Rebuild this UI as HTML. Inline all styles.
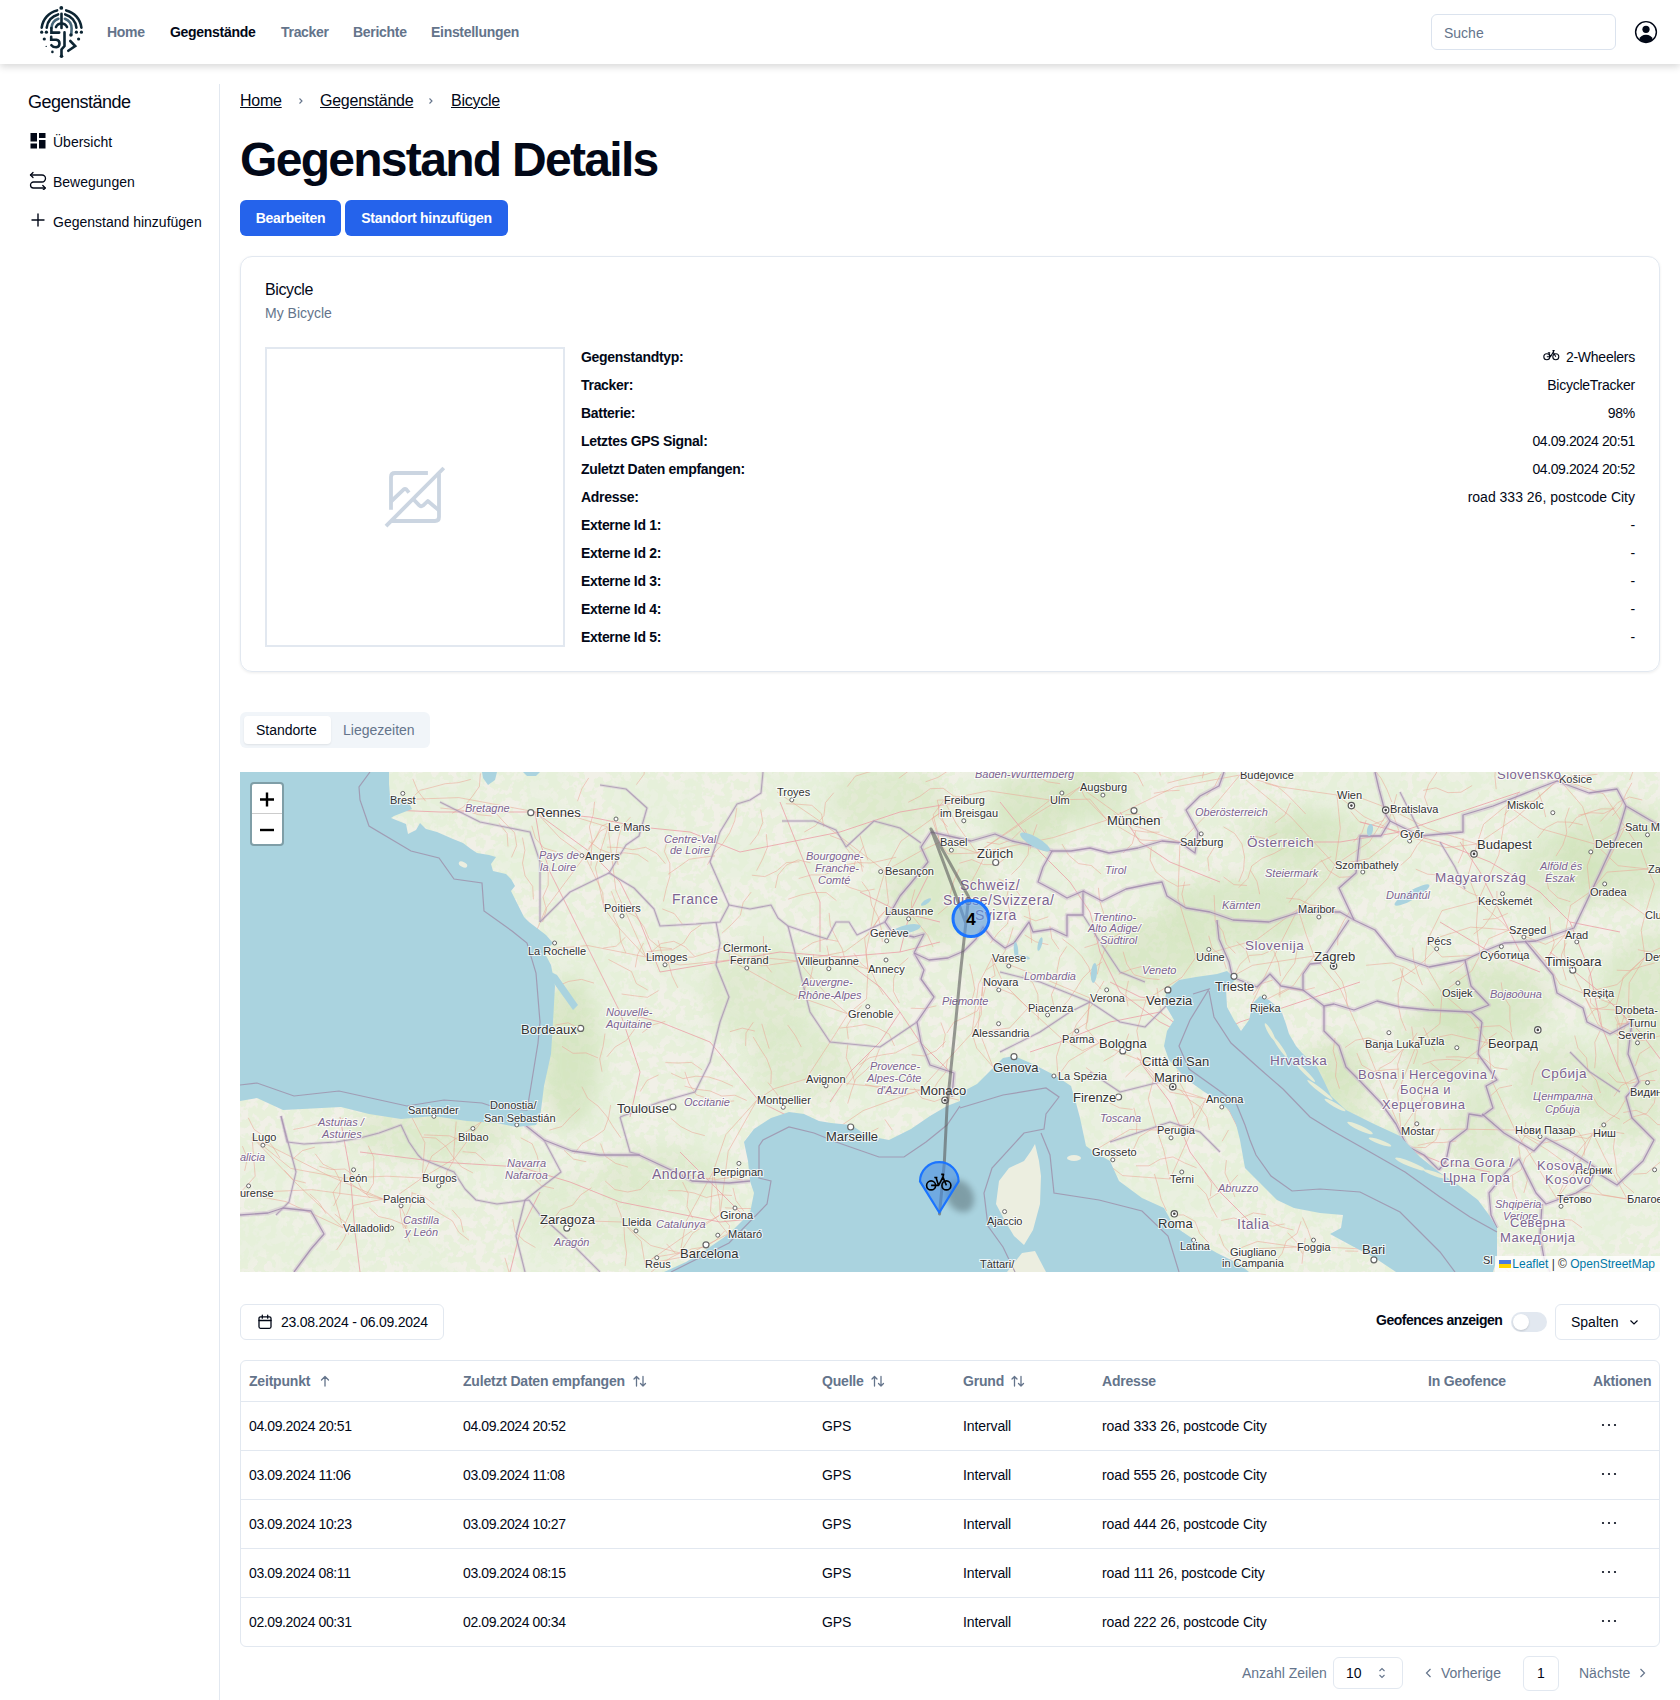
<!DOCTYPE html>
<html><head><meta charset="utf-8">
<style>
*{box-sizing:border-box;margin:0;padding:0}
html,body{width:1680px;height:1700px;overflow:hidden;background:#fff}
body{font-family:"Liberation Sans",sans-serif;color:#020817;position:relative}
.abs{position:absolute;white-space:nowrap}
#hdr{position:absolute;left:0;top:0;width:1680px;height:64px;background:#fff;box-shadow:0 3px 7px rgba(0,0,0,.15);z-index:5}
.nav{position:absolute;top:24px;letter-spacing:-0.3px;font-size:14px;font-weight:bold;color:#64748b;white-space:nowrap}
.nav.act{color:#020817}
#search{position:absolute;left:1431px;top:14px;width:185px;height:36px;border:1px solid #dbe3ee;border-radius:6px;font-size:14px;color:#64748b;padding:10px 0 0 12px}
#sideline{position:absolute;left:219px;top:84px;width:1px;height:1616px;background:#e2e8f0}
.sitem{position:absolute;left:53px;font-size:14px;color:#020817;white-space:nowrap}
.bc{position:absolute;top:92px;letter-spacing:-0.25px;font-size:16px;text-decoration:underline;color:#020817;white-space:nowrap}
.btn{position:absolute;top:200px;height:36px;background:#2563eb;border-radius:6px;color:#fff;font-size:14px;font-weight:bold;text-align:center;line-height:36px;white-space:nowrap;letter-spacing:-0.3px}
#card{position:absolute;left:240px;top:256px;width:1420px;height:416px;border:1px solid #e2e8f0;border-radius:12px;box-shadow:0 1px 3px rgba(0,0,0,.08)}
.lbl{position:absolute;left:581px;letter-spacing:-0.3px;font-size:14px;font-weight:bold;color:#020817;white-space:nowrap}
.val{position:absolute;right:45px;letter-spacing:-0.25px;font-size:14px;color:#020817;text-align:right;white-space:nowrap}
#tabs{position:absolute;left:240px;top:712px;width:190px;height:36px;background:#f1f5f9;border-radius:6px}
#map{position:absolute;left:240px;top:772px;width:1420px;height:500px;background:#aad3df;overflow:hidden}
.th{position:absolute;top:1373px;letter-spacing:-0.2px;font-size:14px;font-weight:bold;color:#64748b;white-space:nowrap}
.td{position:absolute;letter-spacing:-0.1px;font-size:14px;color:#020817;white-space:nowrap}
.hl{position:absolute;left:241px;width:1418px;height:1px;background:#e2e8f0}
.ob{position:absolute;border:1px solid #e2e8f0;border-radius:6px;background:#fff}
.dt{letter-spacing:-0.4px}
</style></head><body>
<div id="hdr">
  <svg class="abs" style="left:0;top:0" width="100" height="64" viewBox="0 0 100 64">
    <g fill="none" stroke="#0d2533" stroke-width="2.6" stroke-linecap="round">
      <path d="M41.7 27.6 A20 20 0 0 1 57.1 10.4"/>
      <path d="M66.2 10.4 A20 20 0 0 1 81.4 27.6"/>
      <path d="M46.7 27.6 A15.3 15.3 0 0 1 58.1 14.4"/>
      <path d="M65.2 14.4 A15.3 15.3 0 0 1 76.4 27.6"/>
      <path d="M51.4 28 A10.5 10.5 0 0 1 58.4 18.8" stroke="#48687a"/>
      <path d="M64.9 18.8 A10.5 10.5 0 0 1 71.6 28.6 L71.3 34.8" stroke="#48687a"/>
      <path d="M56 27.1 A6 6 0 0 1 67 27.1"/>
      <path d="M61.5 13.8 V28"/>
      <path d="M51.4 28 V32.6 H59.2"/>
      <path d="M51.2 36.8 V39.8 H56.3 A3.8 3.8 0 0 1 56.3 47.3 Q53 47.3 51.4 45.2"/>
      <path d="M64.5 32.4 V46 L61.5 49.5 V56"/>
      <path d="M70.3 41 L75.2 46 L68.3 50.8"/>
    </g>
    <g fill="#0d2533">
      <circle cx="61.3" cy="7.9" r="1.9"/>
      <circle cx="41.7" cy="32.2" r="1.6"/><circle cx="46.4" cy="32.2" r="1.6"/>
      <circle cx="76.4" cy="32.2" r="1.6"/><circle cx="81.4" cy="32.2" r="1.6"/>
      <circle cx="44.3" cy="39" r="1.6"/><circle cx="78.6" cy="39" r="1.6"/>
      <circle cx="52.4" cy="51.9" r="1.3"/><circle cx="46.2" cy="46.4" r="0.7"/>
      <circle cx="61.5" cy="56.2" r="1.8"/><circle cx="70.9" cy="35" r="1.7"/>
    </g>
  </svg>
  <div class="nav" style="left:107px">Home</div>
  <div class="nav act" style="left:170px">Gegenstände</div>
  <div class="nav" style="left:281px">Tracker</div>
  <div class="nav" style="left:353px">Berichte</div>
  <div class="nav" style="left:431px">Einstellungen</div>
  <div id="search">Suche</div>
  <svg class="abs" style="left:1634px;top:20px" width="24" height="24" viewBox="0 0 24 24">
    <circle cx="12" cy="12" r="10.4" fill="none" stroke="#020817" stroke-width="1.45"/>
    <circle cx="12" cy="9.3" r="3.6" fill="#020817"/>
    <path d="M5.2 19.3 Q6.8 14.8 12 14.8 Q17.2 14.8 18.8 19.3 Q16 22.4 12 22.4 Q8 22.4 5.2 19.3Z" fill="#020817"/>
  </svg>
</div>
<div id="sideline"></div>
<div class="abs" style="left:28px;top:92px;font-size:18px;letter-spacing:-0.5px">Gegenstände</div>
<svg class="abs" style="left:30px;top:133px" width="16" height="16" viewBox="0 0 16 16" fill="#020817">
  <rect x="0.5" y="0" width="6.5" height="8.5"/><rect x="9" y="0" width="6.5" height="5"/>
  <rect x="0.5" y="10.5" width="6.5" height="5"/><rect x="9" y="7" width="6.5" height="8.5"/>
</svg>
<div class="sitem" style="top:134px">Übersicht</div>
<svg class="abs" style="left:28px;top:170px" width="20" height="20" viewBox="0 0 20 20" fill="none" stroke="#020817" stroke-width="1.3" stroke-linecap="round" stroke-linejoin="round">
  <path d="M5 2.5 L2.5 5 L5 7.5"/><path d="M2.5 5 H14 A3.5 3.5 0 0 1 14 12 H5.5 A3 3 0 0 0 5.5 18 H17"/><path d="M14.8 15.5 L17.3 18 L14.8 20.5"/>
</svg>
<div class="sitem" style="top:174px">Bewegungen</div>
<svg class="abs" style="left:30px;top:212px" width="16" height="16" viewBox="0 0 16 16" stroke="#020817" stroke-width="1.4" stroke-linecap="round">
  <path d="M8 2 V14 M2 8 H14"/>
</svg>
<div class="sitem" style="top:214px">Gegenstand hinzufügen</div>

<div class="bc" style="left:240px">Home</div>
<svg class="abs" style="left:297px;top:97px" width="8" height="8" viewBox="0 0 8 8"><path d="M2.5 1.5 L5 4 L2.5 6.5" fill="none" stroke="#64748b" stroke-width="1.1"/></svg>
<div class="bc" style="left:320px">Gegenstände</div>
<svg class="abs" style="left:427px;top:97px" width="8" height="8" viewBox="0 0 8 8"><path d="M2.5 1.5 L5 4 L2.5 6.5" fill="none" stroke="#64748b" stroke-width="1.1"/></svg>
<div class="bc" style="left:451px">Bicycle</div>
<div class="abs" style="left:240px;top:132px;font-size:48px;font-weight:bold;letter-spacing:-1.7px">Gegenstand Details</div>
<div class="btn" style="left:240px;width:101px">Bearbeiten</div>
<div class="btn" style="left:345px;width:163px">Standort hinzufügen</div>

<div id="card"></div>
<div class="abs" style="left:265px;top:281px;font-size:16px;letter-spacing:-0.4px">Bicycle</div>
<div class="abs" style="left:265px;top:305px;font-size:14px;color:#64748b">My Bicycle</div>
<div class="abs" style="left:265px;top:347px;width:300px;height:300px;border:2px solid #e2e8f0"></div>
<svg class="abs" style="left:375px;top:458px" width="80" height="80" viewBox="0 0 80 80" fill="none" stroke="#cbd5e1" stroke-width="3.8" stroke-linejoin="round">
  <path d="M16 51.7 V19 Q16 15 20 15 H52.9"/><path d="M64 15.7 V59 Q64 63 60 63 H17"/><path d="M11 68.1 L68.8 10"/>
  <path d="M16 43.5 L28.5 31.6 Q30 30.4 31.5 31.6 L34 34.6"/><path d="M38.4 41.2 L44.5 47.6 Q46.2 49 48 47.6 L52.8 43 L64 52.4"/>
</svg>
<div class="lbl" style="top:349px">Gegenstandtyp:</div>
<div class="lbl" style="top:377px">Tracker:</div>
<div class="lbl" style="top:405px">Batterie:</div>
<div class="lbl" style="top:433px">Letztes GPS Signal:</div>
<div class="lbl" style="top:461px">Zuletzt Daten empfangen:</div>
<div class="lbl" style="top:489px">Adresse:</div>
<div class="lbl" style="top:517px">Externe Id 1:</div>
<div class="lbl" style="top:545px">Externe Id 2:</div>
<div class="lbl" style="top:573px">Externe Id 3:</div>
<div class="lbl" style="top:601px">Externe Id 4:</div>
<div class="lbl" style="top:629px">Externe Id 5:</div>
<svg class="abs" style="left:1543px;top:349px" width="17" height="12" viewBox="0 0 17 12" fill="none" stroke="#020817" stroke-width="1.1">
  <circle cx="3.8" cy="7.8" r="3"/><circle cx="12.8" cy="7.8" r="3"/><path d="M3.8 7.8 H7.5 L10.2 3.2 L12.8 7.8 M7.5 7.8 L5.8 3.8 M4.8 3.8 H7.2 M9.5 1.6 H11 L10.2 3.2"/>
</svg>
<div class="val" style="top:349px">2-Wheelers</div>
<div class="val" style="top:377px">BicycleTracker</div>
<div class="val" style="top:405px">98%</div>
<div class="val dt" style="top:433px">04.09.2024 20:51</div>
<div class="val dt" style="top:461px">04.09.2024 20:52</div>
<div class="val" style="top:489px;letter-spacing:0">road 333 26, postcode City</div>
<div class="val" style="top:517px">-</div>
<div class="val" style="top:545px">-</div>
<div class="val" style="top:573px">-</div>
<div class="val" style="top:601px">-</div>
<div class="val" style="top:629px">-</div>

<div id="tabs"></div>
<div class="abs" style="left:244px;top:716px;width:87px;height:28px;background:#fff;border-radius:4px;box-shadow:0 1px 2px rgba(0,0,0,.08)"></div>
<div class="abs" style="left:256px;top:722px;font-size:14px;color:#020817">Standorte</div>
<div class="abs" style="left:343px;top:722px;font-size:14px;color:#64748b">Liegezeiten</div>

<div id="map"><svg width="1420" height="500" viewBox="0 0 1420 500" style="position:absolute;left:0;top:0">
<defs><filter id="blur8" x="-50%" y="-50%" width="200%" height="200%"><feGaussianBlur stdDeviation="9"/></filter><filter id="blur3" x="-50%" y="-50%" width="200%" height="200%"><feGaussianBlur stdDeviation="3"/></filter></defs>
<filter id="tex" x="0" y="0" width="100%" height="100%"><feTurbulence type="fractalNoise" baseFrequency="0.11" numOctaves="3" seed="5" result="n"/><feColorMatrix in="n" type="matrix" values="0 0 0 0 0.78  0 0 0 0 0.87  0 0 0 0 0.69  0 0 0 -14 7.6"/></filter>
<filter id="tex2" x="0" y="0" width="100%" height="100%"><feTurbulence type="fractalNoise" baseFrequency="0.018" numOctaves="2" seed="11" result="n"/><feColorMatrix in="n" type="matrix" values="0 0 0 0 0.80  0 0 0 0 0.88  0 0 0 0 0.72  0 0 0 -6 3.4"/></filter>
<rect width="1420" height="500" fill="#f1f0e7"/>
<rect width="1420" height="500" filter="url(#tex2)" opacity="0.6"/>
<rect width="1420" height="500" filter="url(#tex)" opacity="0.75"/>
<ellipse cx="330" cy="280" rx="30" ry="75" fill="#c9dfb0" opacity="0.55" filter="url(#blur8)"/>
<ellipse cx="650" cy="30" rx="60" ry="35" fill="#c9dfb0" opacity="0.35" filter="url(#blur8)"/>
<ellipse cx="700" cy="120" rx="55" ry="50" fill="#c9dfb0" opacity="0.4" filter="url(#blur8)"/>
<ellipse cx="520" cy="220" rx="55" ry="50" fill="#c9dfb0" opacity="0.3" filter="url(#blur8)"/>
<ellipse cx="560" cy="290" rx="50" ry="40" fill="#c9dfb0" opacity="0.3" filter="url(#blur8)"/>
<ellipse cx="790" cy="40" rx="40" ry="40" fill="#c9dfb0" opacity="0.5" filter="url(#blur8)"/>
<ellipse cx="850" cy="20" rx="40" ry="30" fill="#c9dfb0" opacity="0.45" filter="url(#blur8)"/>
<ellipse cx="910" cy="180" rx="60" ry="35" fill="#c9dfb0" opacity="0.45" filter="url(#blur8)"/>
<ellipse cx="1000" cy="140" rx="80" ry="35" fill="#c9dfb0" opacity="0.45" filter="url(#blur8)"/>
<ellipse cx="1080" cy="80" rx="60" ry="40" fill="#c9dfb0" opacity="0.35" filter="url(#blur8)"/>
<ellipse cx="1200" cy="270" rx="40" ry="45" fill="#c9dfb0" opacity="0.4" filter="url(#blur8)"/>
<ellipse cx="1250" cy="230" rx="60" ry="40" fill="#c9dfb0" opacity="0.45" filter="url(#blur8)"/>
<ellipse cx="1320" cy="100" rx="45" ry="40" fill="#c9dfb0" opacity="0.4" filter="url(#blur8)"/>
<ellipse cx="1380" cy="80" rx="60" ry="50" fill="#c9dfb0" opacity="0.45" filter="url(#blur8)"/>
<ellipse cx="1320" cy="310" rx="50" ry="40" fill="#c9dfb0" opacity="0.35" filter="url(#blur8)"/>
<ellipse cx="1420" cy="220" rx="60" ry="60" fill="#c9dfb0" opacity="0.4" filter="url(#blur8)"/>
<ellipse cx="1390" cy="320" rx="40" ry="50" fill="#c9dfb0" opacity="0.35" filter="url(#blur8)"/>
<ellipse cx="1090" cy="340" rx="40" ry="70" fill="#c9dfb0" opacity="0.35" filter="url(#blur8)"/>
<ellipse cx="1150" cy="400" rx="40" ry="40" fill="#c9dfb0" opacity="0.3" filter="url(#blur8)"/>
<ellipse cx="780" cy="420" rx="20" ry="40" fill="#c9dfb0" opacity="0.3" filter="url(#blur8)"/>
<ellipse cx="190" cy="360" rx="80" ry="30" fill="#c9dfb0" opacity="0.35" filter="url(#blur8)"/>
<ellipse cx="350" cy="440" rx="70" ry="40" fill="#c9dfb0" opacity="0.2" filter="url(#blur8)"/>
<ellipse cx="600" cy="450" rx="60" ry="40" fill="#c9dfb0" opacity="0.25" filter="url(#blur8)"/>
<ellipse cx="420" cy="400" rx="60" ry="25" fill="#c9dfb0" opacity="0.3" filter="url(#blur8)"/>
<ellipse cx="1240" cy="360" rx="30" ry="50" fill="#c9dfb0" opacity="0.35" filter="url(#blur8)"/>
<ellipse cx="1100" cy="300" rx="30" ry="30" fill="#c9dfb0" opacity="0.3" filter="url(#blur8)"/>
<ellipse cx="1050" cy="60" rx="50" ry="25" fill="#c9dfb0" opacity="0.3" filter="url(#blur8)"/>
<path d="M150,28 L218.8,25.6 L296,40" fill="none" stroke="#eba595" stroke-width="0.9" opacity="0.6"/>
<path d="M368,55 L360.1,59.2 L345,84" fill="none" stroke="#eba595" stroke-width="0.9" opacity="0.6"/>
<path d="M368,55 L332.9,44.3 L296,40" fill="none" stroke="#eba595" stroke-width="0.9" opacity="0.6"/>
<path d="M368,55 L355.4,95.7 L364,136" fill="none" stroke="#eba595" stroke-width="0.9" opacity="0.6"/>
<path d="M368,55 L375.9,118.4 L406,185" fill="none" stroke="#eba595" stroke-width="0.9" opacity="0.6"/>
<path d="M537,20 L580.7,49.7 L645,99" fill="none" stroke="#eba595" stroke-width="0.9" opacity="0.6"/>
<path d="M840,15 L823.2,29.3 L810,28" fill="none" stroke="#eba595" stroke-width="0.9" opacity="0.6"/>
<path d="M840,15 L844.5,24.9 L867,48" fill="none" stroke="#eba595" stroke-width="0.9" opacity="0.6"/>
<path d="M840,15 L893.1,53.2 L940,70" fill="none" stroke="#eba595" stroke-width="0.9" opacity="0.6"/>
<path d="M840,15 L790.4,45.5 L737,81" fill="none" stroke="#eba595" stroke-width="0.9" opacity="0.6"/>
<path d="M810,28 L849.9,27.1 L867,48" fill="none" stroke="#eba595" stroke-width="0.9" opacity="0.6"/>
<path d="M810,28 L782.1,49.5 L737,81" fill="none" stroke="#eba595" stroke-width="0.9" opacity="0.6"/>
<path d="M810,28 L748.5,18.8 L704,28" fill="none" stroke="#eba595" stroke-width="0.9" opacity="0.6"/>
<path d="M1000,3 L965.4,44.1 L940,70" fill="none" stroke="#eba595" stroke-width="0.9" opacity="0.6"/>
<path d="M1000,3 L1040.8,15.0 L1097,23" fill="none" stroke="#eba595" stroke-width="0.9" opacity="0.6"/>
<path d="M1000,3 L1050.8,44.9 L1095,93" fill="none" stroke="#eba595" stroke-width="0.9" opacity="0.6"/>
<path d="M1000,3 L934.6,15.0 L867,48" fill="none" stroke="#eba595" stroke-width="0.9" opacity="0.6"/>
<path d="M1097,23 L1112.9,22.9 L1150,37" fill="none" stroke="#eba595" stroke-width="0.9" opacity="0.6"/>
<path d="M1097,23 L1100.3,56.3 L1095,93" fill="none" stroke="#eba595" stroke-width="0.9" opacity="0.6"/>
<path d="M1097,23 L1124.0,44.6 L1160,62" fill="none" stroke="#eba595" stroke-width="0.9" opacity="0.6"/>
<path d="M1150,37 L1153.9,44.7 L1160,62" fill="none" stroke="#eba595" stroke-width="0.9" opacity="0.6"/>
<path d="M1150,37 L1129.6,69.8 L1095,93" fill="none" stroke="#eba595" stroke-width="0.9" opacity="0.6"/>
<path d="M1150,37 L1187.4,56.3 L1237,72" fill="none" stroke="#eba595" stroke-width="0.9" opacity="0.6"/>
<path d="M1319,7 L1293.6,29.0 L1267,33" fill="none" stroke="#eba595" stroke-width="0.9" opacity="0.6"/>
<path d="M1319,7 L1342.5,34.4 L1355,72" fill="none" stroke="#eba595" stroke-width="0.9" opacity="0.6"/>
<path d="M1319,7 L1363.5,21.8 L1385,55" fill="none" stroke="#eba595" stroke-width="0.9" opacity="0.6"/>
<path d="M1319,7 L1276.0,45.7 L1237,72" fill="none" stroke="#eba595" stroke-width="0.9" opacity="0.6"/>
<path d="M1267,33 L1243.6,52.2 L1237,72" fill="none" stroke="#eba595" stroke-width="0.9" opacity="0.6"/>
<path d="M1267,33 L1299.9,56.5 L1355,72" fill="none" stroke="#eba595" stroke-width="0.9" opacity="0.6"/>
<path d="M1267,33 L1258.8,82.8 L1238,129" fill="none" stroke="#eba595" stroke-width="0.9" opacity="0.6"/>
<path d="M1385,55 L1379.0,59.0 L1355,72" fill="none" stroke="#eba595" stroke-width="0.9" opacity="0.6"/>
<path d="M1385,55 L1401.2,78.3 L1408,97" fill="none" stroke="#eba595" stroke-width="0.9" opacity="0.6"/>
<path d="M1385,55 L1369.4,86.4 L1350,120" fill="none" stroke="#eba595" stroke-width="0.9" opacity="0.6"/>
<path d="M345,84 L362.7,120.7 L364,136" fill="none" stroke="#eba595" stroke-width="0.9" opacity="0.6"/>
<path d="M345,84 L319.9,65.9 L296,40" fill="none" stroke="#eba595" stroke-width="0.9" opacity="0.6"/>
<path d="M345,84 L306.0,136.3 L288,179" fill="none" stroke="#eba595" stroke-width="0.9" opacity="0.6"/>
<path d="M645,99 L648.5,130.8 L645,139" fill="none" stroke="#eba595" stroke-width="0.9" opacity="0.6"/>
<path d="M645,99 L680.2,79.3 L700,70" fill="none" stroke="#eba595" stroke-width="0.9" opacity="0.6"/>
<path d="M645,99 L634.8,134.0 L630,161" fill="none" stroke="#eba595" stroke-width="0.9" opacity="0.6"/>
<path d="M645,99 L661.0,69.1 L700,41" fill="none" stroke="#eba595" stroke-width="0.9" opacity="0.6"/>
<path d="M700,70 L692.0,46.3 L700,41" fill="none" stroke="#eba595" stroke-width="0.9" opacity="0.6"/>
<path d="M700,70 L707.9,81.9 L737,81" fill="none" stroke="#eba595" stroke-width="0.9" opacity="0.6"/>
<path d="M700,70 L693.1,42.9 L704,28" fill="none" stroke="#eba595" stroke-width="0.9" opacity="0.6"/>
<path d="M940,70 L900.9,67.9 L867,48" fill="none" stroke="#eba595" stroke-width="0.9" opacity="0.6"/>
<path d="M940,70 L937.9,126.3 L956,185" fill="none" stroke="#eba595" stroke-width="0.9" opacity="0.6"/>
<path d="M1160,62 L1128.7,86.7 L1095,93" fill="none" stroke="#eba595" stroke-width="0.9" opacity="0.6"/>
<path d="M1160,62 L1206.2,75.7 L1237,72" fill="none" stroke="#eba595" stroke-width="0.9" opacity="0.6"/>
<path d="M1355,72 L1347.2,94.0 L1350,120" fill="none" stroke="#eba595" stroke-width="0.9" opacity="0.6"/>
<path d="M1355,72 L1378.1,93.7 L1408,97" fill="none" stroke="#eba595" stroke-width="0.9" opacity="0.6"/>
<path d="M1095,93 L1087.5,106.6 L1058,137" fill="none" stroke="#eba595" stroke-width="0.9" opacity="0.6"/>
<path d="M364,136 L377.2,154.1 L406,185" fill="none" stroke="#eba595" stroke-width="0.9" opacity="0.6"/>
<path d="M645,139 L639.6,144.3 L630,161" fill="none" stroke="#eba595" stroke-width="0.9" opacity="0.6"/>
<path d="M645,139 L624.6,166.1 L628,197" fill="none" stroke="#eba595" stroke-width="0.9" opacity="0.6"/>
<path d="M630,161 L625.9,180.6 L628,197" fill="none" stroke="#eba595" stroke-width="0.9" opacity="0.6"/>
<path d="M630,161 L604.9,179.6 L558,189" fill="none" stroke="#eba595" stroke-width="0.9" opacity="0.6"/>
<path d="M1058,137 L1066.4,163.3 L1074,184" fill="none" stroke="#eba595" stroke-width="0.9" opacity="0.6"/>
<path d="M1058,137 L1038.2,175.8 L1010,236" fill="none" stroke="#eba595" stroke-width="0.9" opacity="0.6"/>
<path d="M1058,137 L1016.6,167.7 L956,185" fill="none" stroke="#eba595" stroke-width="0.9" opacity="0.6"/>
<path d="M1238,129 L1262.5,150.6 L1269,158" fill="none" stroke="#eba595" stroke-width="0.9" opacity="0.6"/>
<path d="M1238,129 L1236.4,153.6 L1240,183" fill="none" stroke="#eba595" stroke-width="0.9" opacity="0.6"/>
<path d="M1238,129 L1228.0,103.7 L1237,72" fill="none" stroke="#eba595" stroke-width="0.9" opacity="0.6"/>
<path d="M1238,129 L1202.0,138.6 L1187,169" fill="none" stroke="#eba595" stroke-width="0.9" opacity="0.6"/>
<path d="M1350,120 L1330.5,133.4 L1325,163" fill="none" stroke="#eba595" stroke-width="0.9" opacity="0.6"/>
<path d="M1350,120 L1373.7,120.8 L1405,143" fill="none" stroke="#eba595" stroke-width="0.9" opacity="0.6"/>
<path d="M1350,120 L1367.0,100.1 L1408,97" fill="none" stroke="#eba595" stroke-width="0.9" opacity="0.6"/>
<path d="M1187,169 L1184.9,191.7 L1202,221" fill="none" stroke="#eba595" stroke-width="0.9" opacity="0.6"/>
<path d="M1187,169 L1202.1,185.0 L1240,183" fill="none" stroke="#eba595" stroke-width="0.9" opacity="0.6"/>
<path d="M1187,169 L1230.7,155.1 L1269,158" fill="none" stroke="#eba595" stroke-width="0.9" opacity="0.6"/>
<path d="M1269,158 L1248.6,166.8 L1240,183" fill="none" stroke="#eba595" stroke-width="0.9" opacity="0.6"/>
<path d="M1269,158 L1283.7,164.4 L1305,189" fill="none" stroke="#eba595" stroke-width="0.9" opacity="0.6"/>
<path d="M1269,158 L1305.4,172.3 L1325,163" fill="none" stroke="#eba595" stroke-width="0.9" opacity="0.6"/>
<path d="M1325,163 L1314.2,175.6 L1305,189" fill="none" stroke="#eba595" stroke-width="0.9" opacity="0.6"/>
<path d="M1325,163 L1324.1,182.5 L1343,221" fill="none" stroke="#eba595" stroke-width="0.9" opacity="0.6"/>
<path d="M1405,143 L1401.2,158.4 L1405,185" fill="none" stroke="#eba595" stroke-width="0.9" opacity="0.6"/>
<path d="M1405,143 L1414.4,111.9 L1408,97" fill="none" stroke="#eba595" stroke-width="0.9" opacity="0.6"/>
<path d="M288,179 L347.7,173.5 L406,185" fill="none" stroke="#eba595" stroke-width="0.9" opacity="0.6"/>
<path d="M483,176 L487.5,170.6 L490,188" fill="none" stroke="#eba595" stroke-width="0.9" opacity="0.6"/>
<path d="M483,176 L521.2,194.0 L558,189" fill="none" stroke="#eba595" stroke-width="0.9" opacity="0.6"/>
<path d="M483,176 L453.2,185.2 L406,185" fill="none" stroke="#eba595" stroke-width="0.9" opacity="0.6"/>
<path d="M490,188 L518.3,185.3 L558,189" fill="none" stroke="#eba595" stroke-width="0.9" opacity="0.6"/>
<path d="M490,188 L440.0,193.0 L406,185" fill="none" stroke="#eba595" stroke-width="0.9" opacity="0.6"/>
<path d="M490,188 L549.8,221.7 L608,242" fill="none" stroke="#eba595" stroke-width="0.9" opacity="0.6"/>
<path d="M558,189 L588.9,186.4 L628,197" fill="none" stroke="#eba595" stroke-width="0.9" opacity="0.6"/>
<path d="M558,189 L590.5,227.1 L608,242" fill="none" stroke="#eba595" stroke-width="0.9" opacity="0.6"/>
<path d="M628,197 L626.5,226.8 L608,242" fill="none" stroke="#eba595" stroke-width="0.9" opacity="0.6"/>
<path d="M752,186 L755.1,203.8 L743,210" fill="none" stroke="#eba595" stroke-width="0.9" opacity="0.6"/>
<path d="M752,186 L763.4,211.4 L788,236" fill="none" stroke="#eba595" stroke-width="0.9" opacity="0.6"/>
<path d="M752,186 L738.5,212.2 L732,261" fill="none" stroke="#eba595" stroke-width="0.9" opacity="0.6"/>
<path d="M752,186 L789.7,200.7 L850,226" fill="none" stroke="#eba595" stroke-width="0.9" opacity="0.6"/>
<path d="M956,185 L942.0,205.2 L906,228" fill="none" stroke="#eba595" stroke-width="0.9" opacity="0.6"/>
<path d="M1240,183 L1231.9,198.8 L1202,221" fill="none" stroke="#eba595" stroke-width="0.9" opacity="0.6"/>
<path d="M1405,185 L1383.3,204.9 L1375,238" fill="none" stroke="#eba595" stroke-width="0.9" opacity="0.6"/>
<path d="M1405,185 L1389.2,210.9 L1388,251" fill="none" stroke="#eba595" stroke-width="0.9" opacity="0.6"/>
<path d="M1405,185 L1377.0,212.6 L1343,221" fill="none" stroke="#eba595" stroke-width="0.9" opacity="0.6"/>
<path d="M743,210 L773.7,222.5 L788,236" fill="none" stroke="#eba595" stroke-width="0.9" opacity="0.6"/>
<path d="M743,210 L741.2,242.7 L732,261" fill="none" stroke="#eba595" stroke-width="0.9" opacity="0.6"/>
<path d="M743,210 L738.0,256.4 L753,295" fill="none" stroke="#eba595" stroke-width="0.9" opacity="0.6"/>
<path d="M1202,221 L1199.8,251.8 L1178,269" fill="none" stroke="#eba595" stroke-width="0.9" opacity="0.6"/>
<path d="M1202,221 L1231.0,245.5 L1248,271" fill="none" stroke="#eba595" stroke-width="0.9" opacity="0.6"/>
<path d="M1343,221 L1351.3,236.4 L1375,238" fill="none" stroke="#eba595" stroke-width="0.9" opacity="0.6"/>
<path d="M1343,221 L1320.0,212.2 L1305,189" fill="none" stroke="#eba595" stroke-width="0.9" opacity="0.6"/>
<path d="M1343,221 L1376.8,233.5 L1388,251" fill="none" stroke="#eba595" stroke-width="0.9" opacity="0.6"/>
<path d="M1343,221 L1358.1,252.7 L1378,263" fill="none" stroke="#eba595" stroke-width="0.9" opacity="0.6"/>
<path d="M608,242 L592.4,266.6 L566,307" fill="none" stroke="#eba595" stroke-width="0.9" opacity="0.6"/>
<path d="M788,236 L796.0,243.1 L822,267" fill="none" stroke="#eba595" stroke-width="0.9" opacity="0.6"/>
<path d="M788,236 L769.7,255.9 L732,261" fill="none" stroke="#eba595" stroke-width="0.9" opacity="0.6"/>
<path d="M850,226 L846.0,256.3 L859,271" fill="none" stroke="#eba595" stroke-width="0.9" opacity="0.6"/>
<path d="M850,226 L847.5,250.3 L822,267" fill="none" stroke="#eba595" stroke-width="0.9" opacity="0.6"/>
<path d="M850,226 L874.4,228.2 L906,228" fill="none" stroke="#eba595" stroke-width="0.9" opacity="0.6"/>
<path d="M1010,236 L1053.3,213.6 L1074,184" fill="none" stroke="#eba595" stroke-width="0.9" opacity="0.6"/>
<path d="M1375,238 L1379.9,253.4 L1388,251" fill="none" stroke="#eba595" stroke-width="0.9" opacity="0.6"/>
<path d="M1375,238 L1384.3,243.6 L1378,263" fill="none" stroke="#eba595" stroke-width="0.9" opacity="0.6"/>
<path d="M1388,251 L1377.0,252.0 L1378,263" fill="none" stroke="#eba595" stroke-width="0.9" opacity="0.6"/>
<path d="M1378,263 L1377.8,293.6 L1390,320" fill="none" stroke="#eba595" stroke-width="0.9" opacity="0.6"/>
<path d="M732,261 L736.7,276.1 L753,295" fill="none" stroke="#eba595" stroke-width="0.9" opacity="0.6"/>
<path d="M732,261 L697.1,299.3 L680,318" fill="none" stroke="#eba595" stroke-width="0.9" opacity="0.6"/>
<path d="M822,267 L816.5,284.5 L818,304" fill="none" stroke="#eba595" stroke-width="0.9" opacity="0.6"/>
<path d="M822,267 L842.5,278.7 L859,271" fill="none" stroke="#eba595" stroke-width="0.9" opacity="0.6"/>
<path d="M1125,272 L1149.6,280.5 L1178,269" fill="none" stroke="#eba595" stroke-width="0.9" opacity="0.6"/>
<path d="M1125,272 L1143.0,316.3 L1161,359" fill="none" stroke="#eba595" stroke-width="0.9" opacity="0.6"/>
<path d="M1125,272 L1100.1,216.4 L1074,184" fill="none" stroke="#eba595" stroke-width="0.9" opacity="0.6"/>
<path d="M1178,269 L1211.6,262.4 L1248,271" fill="none" stroke="#eba595" stroke-width="0.9" opacity="0.6"/>
<path d="M1178,269 L1157.6,321.2 L1161,359" fill="none" stroke="#eba595" stroke-width="0.9" opacity="0.6"/>
<path d="M566,307 L533.6,316.9 L517,328" fill="none" stroke="#eba595" stroke-width="0.9" opacity="0.6"/>
<path d="M566,307 L618.8,312.9 L680,318" fill="none" stroke="#eba595" stroke-width="0.9" opacity="0.6"/>
<path d="M818,304 L829.0,288.9 L859,271" fill="none" stroke="#eba595" stroke-width="0.9" opacity="0.6"/>
<path d="M1390,320 L1378.0,340.7 L1353,361" fill="none" stroke="#eba595" stroke-width="0.9" opacity="0.6"/>
<path d="M168,338 L184.9,370.6 L182,406" fill="none" stroke="#eba595" stroke-width="0.9" opacity="0.6"/>
<path d="M244,346 L241.6,349.7 L218,365" fill="none" stroke="#eba595" stroke-width="0.9" opacity="0.6"/>
<path d="M244,346 L214.4,386.6 L182,406" fill="none" stroke="#eba595" stroke-width="0.9" opacity="0.6"/>
<path d="M517,328 L485.9,362.6 L473,400" fill="none" stroke="#eba595" stroke-width="0.9" opacity="0.6"/>
<path d="M517,328 L488.2,379.3 L480,443" fill="none" stroke="#eba595" stroke-width="0.9" opacity="0.6"/>
<path d="M966,327 L929.8,320.1 L914,305" fill="none" stroke="#eba595" stroke-width="0.9" opacity="0.6"/>
<path d="M966,327 L948.3,352.0 L917,358" fill="none" stroke="#eba595" stroke-width="0.9" opacity="0.6"/>
<path d="M966,327 L925.7,313.2 L902,289" fill="none" stroke="#eba595" stroke-width="0.9" opacity="0.6"/>
<path d="M966,327 L951.8,358.4 L930,407" fill="none" stroke="#eba595" stroke-width="0.9" opacity="0.6"/>
<path d="M12,365 L15.2,404.2 L0,421" fill="none" stroke="#eba595" stroke-width="0.9" opacity="0.6"/>
<path d="M12,365 L50.8,396.4 L103,406" fill="none" stroke="#eba595" stroke-width="0.9" opacity="0.6"/>
<path d="M12,365 L55.1,410.2 L103,456" fill="none" stroke="#eba595" stroke-width="0.9" opacity="0.6"/>
<path d="M12,365 L89.3,404.0 L143,427" fill="none" stroke="#eba595" stroke-width="0.9" opacity="0.6"/>
<path d="M218,365 L191.9,383.9 L182,406" fill="none" stroke="#eba595" stroke-width="0.9" opacity="0.6"/>
<path d="M917,358 L923.9,378.6 L930,407" fill="none" stroke="#eba595" stroke-width="0.9" opacity="0.6"/>
<path d="M917,358 L908.2,327.1 L914,305" fill="none" stroke="#eba595" stroke-width="0.9" opacity="0.6"/>
<path d="M917,358 L889.8,357.5 L852,380" fill="none" stroke="#eba595" stroke-width="0.9" opacity="0.6"/>
<path d="M1161,359 L1219.3,357.1 L1275,358" fill="none" stroke="#eba595" stroke-width="0.9" opacity="0.6"/>
<path d="M1161,359 L1192.9,311.0 L1248,271" fill="none" stroke="#eba595" stroke-width="0.9" opacity="0.6"/>
<path d="M1275,358 L1308.0,378.3 L1335,398" fill="none" stroke="#eba595" stroke-width="0.9" opacity="0.6"/>
<path d="M1275,358 L1303.5,371.1 L1353,361" fill="none" stroke="#eba595" stroke-width="0.9" opacity="0.6"/>
<path d="M1275,358 L1302.9,403.8 L1317,427" fill="none" stroke="#eba595" stroke-width="0.9" opacity="0.6"/>
<path d="M1275,358 L1252.0,308.9 L1248,271" fill="none" stroke="#eba595" stroke-width="0.9" opacity="0.6"/>
<path d="M1353,361 L1333.0,386.2 L1335,398" fill="none" stroke="#eba595" stroke-width="0.9" opacity="0.6"/>
<path d="M1353,361 L1364.5,385.1 L1387,427" fill="none" stroke="#eba595" stroke-width="0.9" opacity="0.6"/>
<path d="M1353,361 L1333.1,403.9 L1317,427" fill="none" stroke="#eba595" stroke-width="0.9" opacity="0.6"/>
<path d="M852,380 L882.6,403.6 L930,407" fill="none" stroke="#eba595" stroke-width="0.9" opacity="0.6"/>
<path d="M103,406 L124.7,421.3 L143,427" fill="none" stroke="#eba595" stroke-width="0.9" opacity="0.6"/>
<path d="M103,406 L93.1,420.4 L103,456" fill="none" stroke="#eba595" stroke-width="0.9" opacity="0.6"/>
<path d="M103,406 L147.0,404.2 L182,406" fill="none" stroke="#eba595" stroke-width="0.9" opacity="0.6"/>
<path d="M182,406 L152.2,427.0 L143,427" fill="none" stroke="#eba595" stroke-width="0.9" opacity="0.6"/>
<path d="M473,400 L479.7,428.7 L480,443" fill="none" stroke="#eba595" stroke-width="0.9" opacity="0.6"/>
<path d="M473,400 L470.5,439.5 L488,462" fill="none" stroke="#eba595" stroke-width="0.9" opacity="0.6"/>
<path d="M473,400 L446.1,449.2 L440,481" fill="none" stroke="#eba595" stroke-width="0.9" opacity="0.6"/>
<path d="M1335,398 L1324.9,408.6 L1317,427" fill="none" stroke="#eba595" stroke-width="0.9" opacity="0.6"/>
<path d="M1335,398 L1362.3,422.7 L1387,427" fill="none" stroke="#eba595" stroke-width="0.9" opacity="0.6"/>
<path d="M0,421 L45.9,429.6 L103,456" fill="none" stroke="#eba595" stroke-width="0.9" opacity="0.6"/>
<path d="M0,421 L72.1,417.7 L143,427" fill="none" stroke="#eba595" stroke-width="0.9" opacity="0.6"/>
<path d="M143,427 L113.6,433.4 L103,456" fill="none" stroke="#eba595" stroke-width="0.9" opacity="0.6"/>
<path d="M1317,427 L1341.2,419.8 L1387,427" fill="none" stroke="#eba595" stroke-width="0.9" opacity="0.6"/>
<path d="M480,443 L489.6,453.7 L488,462" fill="none" stroke="#eba595" stroke-width="0.9" opacity="0.6"/>
<path d="M480,443 L452.5,461.4 L440,481" fill="none" stroke="#eba595" stroke-width="0.9" opacity="0.6"/>
<path d="M480,443 L452.9,458.1 L405,492" fill="none" stroke="#eba595" stroke-width="0.9" opacity="0.6"/>
<path d="M382,450 L401.2,469.4 L405,492" fill="none" stroke="#eba595" stroke-width="0.9" opacity="0.6"/>
<path d="M382,450 L410.9,473.5 L440,481" fill="none" stroke="#eba595" stroke-width="0.9" opacity="0.6"/>
<path d="M382,450 L338.4,448.7 L300,447" fill="none" stroke="#eba595" stroke-width="0.9" opacity="0.6"/>
<path d="M488,462 L468.5,483.1 L440,481" fill="none" stroke="#eba595" stroke-width="0.9" opacity="0.6"/>
<path d="M488,462 L442.7,485.0 L405,492" fill="none" stroke="#eba595" stroke-width="0.9" opacity="0.6"/>
<path d="M990,480 L1017.6,469.4 L1057,475" fill="none" stroke="#eba595" stroke-width="0.9" opacity="0.6"/>
<path d="M982,491 L1014.3,476.8 L1057,475" fill="none" stroke="#eba595" stroke-width="0.9" opacity="0.6"/>
<path d="M1057,475 L1084.5,475.0 L1122,477" fill="none" stroke="#eba595" stroke-width="0.9" opacity="0.6"/>
<path d="M405,492 L414.3,485.2 L440,481" fill="none" stroke="#eba595" stroke-width="0.9" opacity="0.6"/>
<path d="M867,48 L813.3,65.6 L737,81" fill="none" stroke="#eba595" stroke-width="0.9" opacity="0.6"/>
<path d="M737,81 L712.4,72.2 L700,41" fill="none" stroke="#eba595" stroke-width="0.9" opacity="0.6"/>
<path d="M737,81 L715.9,51.1 L704,28" fill="none" stroke="#eba595" stroke-width="0.9" opacity="0.6"/>
<path d="M859,271 L879.9,280.1 L902,289" fill="none" stroke="#eba595" stroke-width="0.9" opacity="0.6"/>
<path d="M906,228 L896.8,258.6 L902,289" fill="none" stroke="#eba595" stroke-width="0.9" opacity="0.6"/>
<path d="M975,214 L1012.6,193.3 L1074,184" fill="none" stroke="#eba595" stroke-width="0.9" opacity="0.6"/>
<path d="M586,364 L623.2,338.6 L680,318" fill="none" stroke="#eba595" stroke-width="0.9" opacity="0.6"/>
<path d="M902,289 L897.0,285.5 L914,305" fill="none" stroke="#eba595" stroke-width="0.9" opacity="0.6"/>
<path d="M704,28 L697.3,28.1 L700,41" fill="none" stroke="#eba595" stroke-width="0.9" opacity="0.6"/>
<path d="M831.5,264.6 L836.3,252.5 L844.5,242.4 L852.6,232.2 L857.3,220.1 L864.0,209.0" fill="none" stroke="#eba595" stroke-width="0.9" opacity="0.6"/>
<path d="M205.5,412.4 L206.9,399.5 L213.7,388.4 L214.2,375.4 L215.1,362.4 L216.2,349.5" fill="none" stroke="#eba595" stroke-width="0.9" opacity="0.6"/>
<path d="M1173.5,292.0 L1177.5,279.7 L1173.4,267.4 L1171.7,254.5" fill="none" stroke="#eba595" stroke-width="0.9" opacity="0.6"/>
<path d="M1362.5,188.3 L1349.6,190.0 L1336.6,189.3" fill="none" stroke="#eba595" stroke-width="0.9" opacity="0.6"/>
<path d="M4.7,398.8 L7.4,386.1 L2.4,374.1" fill="none" stroke="#eba595" stroke-width="0.9" opacity="0.6"/>
<path d="M1046.2,126.1 L1059.2,127.3 L1070.9,133.1 L1083.8,134.1 L1096.3,137.8" fill="none" stroke="#eba595" stroke-width="0.9" opacity="0.6"/>
<path d="M109.0,455.2 L103.9,467.2 L96.6,478.0" fill="none" stroke="#eba595" stroke-width="0.9" opacity="0.6"/>
<path d="M360.6,371.6 L364.9,383.9 L375.6,391.4 L388.0,395.1" fill="none" stroke="#eba595" stroke-width="0.9" opacity="0.6"/>
<path d="M954.2,346.1 L952.0,333.3 L946.0,321.7 L939.6,310.5 L937.6,297.6" fill="none" stroke="#eba595" stroke-width="0.9" opacity="0.6"/>
<path d="M1410.5,274.5 L1399.6,281.6 L1395.4,293.9" fill="none" stroke="#eba595" stroke-width="0.9" opacity="0.6"/>
<path d="M1374.7,224.7 L1366.3,234.7 L1353.8,238.1 L1345.3,248.0" fill="none" stroke="#eba595" stroke-width="0.9" opacity="0.6"/>
<path d="M128.2,373.7 L133.8,385.5 L133.7,398.5 L133.4,411.5 L126.5,422.5" fill="none" stroke="#eba595" stroke-width="0.9" opacity="0.6"/>
<path d="M998.7,115.7 L1007.9,106.4 L1011.7,94.0 L1022.2,86.3 L1034.2,81.4 L1045.5,75.0" fill="none" stroke="#eba595" stroke-width="0.9" opacity="0.6"/>
<path d="M1032.6,208.1 L1020.2,212.0 L1013.2,222.9" fill="none" stroke="#eba595" stroke-width="0.9" opacity="0.6"/>
<path d="M170.5,463.2 L163.4,452.3 L151.3,447.4 L138.6,444.5 L129.1,435.6" fill="none" stroke="#eba595" stroke-width="0.9" opacity="0.6"/>
<path d="M108.5,462.7 L105.0,450.2 L94.8,442.1" fill="none" stroke="#eba595" stroke-width="0.9" opacity="0.6"/>
<path d="M940.0,317.5 L948.6,327.2 L959.4,334.4 L966.8,345.2 L969.4,357.9" fill="none" stroke="#eba595" stroke-width="0.9" opacity="0.6"/>
<path d="M607.4,14.5 L615.3,4.2 L627.7,0.3 L640.3,-2.7 L653.3,-1.7 L664.4,-8.6" fill="none" stroke="#eba595" stroke-width="0.9" opacity="0.6"/>
<path d="M1039.9,225.4 L1039.9,212.4 L1046.9,201.5 L1054.7,191.1 L1057.1,178.3" fill="none" stroke="#eba595" stroke-width="0.9" opacity="0.6"/>
<path d="M589.1,140.9 L590.3,153.8 L596.1,165.5 L602.2,177.0 L605.4,189.6" fill="none" stroke="#eba595" stroke-width="0.9" opacity="0.6"/>
<path d="M1152.8,275.2 L1140.8,270.1 L1128.5,265.9 L1115.7,268.2 L1105.0,275.6" fill="none" stroke="#eba595" stroke-width="0.9" opacity="0.6"/>
<path d="M366.9,284.8 L375.2,274.9 L386.5,268.3 L394.2,257.8 L398.2,245.5 L406.2,235.3" fill="none" stroke="#eba595" stroke-width="0.9" opacity="0.6"/>
<path d="M707.4,287.1 L705.8,300.0 L697.6,310.2 L691.2,321.5" fill="none" stroke="#eba595" stroke-width="0.9" opacity="0.6"/>
<path d="M917.0,215.9 L918.7,228.8 L921.8,241.4" fill="none" stroke="#eba595" stroke-width="0.9" opacity="0.6"/>
<path d="M1375.0,244.9 L1380.6,256.6 L1390.0,265.7 L1402.6,268.5 L1415.2,265.1 L1427.9,262.1" fill="none" stroke="#eba595" stroke-width="0.9" opacity="0.6"/>
<path d="M968.5,470.7 L959.6,461.3 L954.9,449.2 L943.5,442.9 L930.5,443.2" fill="none" stroke="#eba595" stroke-width="0.9" opacity="0.6"/>
<path d="M53.4,357.5 L66.1,355.0 L78.6,351.3 L91.6,352.4 L103.1,346.5" fill="none" stroke="#eba595" stroke-width="0.9" opacity="0.6"/>
<path d="M426.5,471.8 L435.4,481.3" fill="none" stroke="#eba595" stroke-width="0.9" opacity="0.6"/>
<path d="M674.9,117.4 L671.5,129.9 L671.5,142.9 L679.6,153.1 L687.7,163.3 L693.1,175.1" fill="none" stroke="#eba595" stroke-width="0.9" opacity="0.6"/>
<path d="M596.4,128.6 L586.2,120.6 L573.2,120.4 L560.5,123.1 L548.2,127.2" fill="none" stroke="#eba595" stroke-width="0.9" opacity="0.6"/>
<path d="M969.2,99.0 L967.7,86.1 L974.4,75.0" fill="none" stroke="#eba595" stroke-width="0.9" opacity="0.6"/>
<path d="M442.6,410.0 L448.3,421.7 L447.0,434.7 L452.7,446.3" fill="none" stroke="#eba595" stroke-width="0.9" opacity="0.6"/>
<path d="M885.5,305.0 L894.9,296.0 L906.1,289.4 L919.0,290.6" fill="none" stroke="#eba595" stroke-width="0.9" opacity="0.6"/>
<path d="M558.7,106.5 L571.2,102.9 L584.2,103.0 L596.0,97.6" fill="none" stroke="#eba595" stroke-width="0.9" opacity="0.6"/>
<path d="M638.5,356.0 L626.9,361.9" fill="none" stroke="#eba595" stroke-width="0.9" opacity="0.6"/>
<path d="M467.5,92.8 L473.9,81.4 L482.7,71.8 L489.7,60.9 L494.7,48.9 L496.8,36.1" fill="none" stroke="#eba595" stroke-width="0.9" opacity="0.6"/>
<path d="M240.4,1.4 L239.4,14.4 L231.9,25.0 L223.5,35.0 L212.1,41.3" fill="none" stroke="#eba595" stroke-width="0.9" opacity="0.6"/>
<path d="M438.4,402.0 L451.3,403.6 L464.0,406.0 L477.0,407.4 L489.8,405.6 L502.6,408.1" fill="none" stroke="#eba595" stroke-width="0.9" opacity="0.6"/>
<path d="M673.8,315.8 L681.8,326.1 L694.3,329.5 L706.5,325.1 L719.2,328.2" fill="none" stroke="#eba595" stroke-width="0.9" opacity="0.6"/>
<path d="M1061.1,449.3 L1057.0,461.6 L1046.3,469.0 L1042.1,481.3 L1034.1,491.5" fill="none" stroke="#eba595" stroke-width="0.9" opacity="0.6"/>
<path d="M979.2,462.1 L983.9,474.2 L992.7,483.8" fill="none" stroke="#eba595" stroke-width="0.9" opacity="0.6"/>
<path d="M1354.6,193.3 L1348.9,205.0 L1349.8,217.9 L1350.7,230.9 L1359.7,240.3 L1361.7,253.2" fill="none" stroke="#eba595" stroke-width="0.9" opacity="0.6"/>
<path d="M430.7,346.1 L440.6,354.5 L452.2,360.3 L464.8,363.6" fill="none" stroke="#eba595" stroke-width="0.9" opacity="0.6"/>
<path d="M1110.8,39.5 L1119.0,49.6 L1131.5,53.1 L1143.6,48.4" fill="none" stroke="#eba595" stroke-width="0.9" opacity="0.6"/>
<path d="M784.7,162.9 L795.7,169.8 L808.4,172.7" fill="none" stroke="#eba595" stroke-width="0.9" opacity="0.6"/>
<path d="M634.7,117.1 L621.9,119.4 L609.5,115.4 L598.4,108.7" fill="none" stroke="#eba595" stroke-width="0.9" opacity="0.6"/>
<path d="M172.1,420.4 L170.8,433.4 L165.4,445.2 L165.2,458.2 L169.6,470.4" fill="none" stroke="#eba595" stroke-width="0.9" opacity="0.6"/>
<path d="M348.4,76.7 L355.7,65.9 L361.4,54.2 L373.3,48.9" fill="none" stroke="#eba595" stroke-width="0.9" opacity="0.6"/>
<path d="M720.4,115.7 L731.7,109.3 L737.9,97.8 L743.7,86.2 L754.0,78.2 L766.7,75.8" fill="none" stroke="#eba595" stroke-width="0.9" opacity="0.6"/>
<path d="M1298.4,20.2 L1302.9,32.4 L1305.7,45.1" fill="none" stroke="#eba595" stroke-width="0.9" opacity="0.6"/>
<path d="M1175.7,97.1 L1187.6,102.2 L1200.6,103.0 L1212.3,108.7" fill="none" stroke="#eba595" stroke-width="0.9" opacity="0.6"/>
<path d="M1342.9,52.9 L1330.2,50.2 L1317.2,49.9 L1305.6,55.8 L1297.5,66.0" fill="none" stroke="#eba595" stroke-width="0.9" opacity="0.6"/>
<path d="M362.0,299.7 L359.7,286.9 L363.1,274.4 L365.0,261.5" fill="none" stroke="#eba595" stroke-width="0.9" opacity="0.6"/>
<path d="M528.0,310.5 L536.0,320.7 L543.4,331.4" fill="none" stroke="#eba595" stroke-width="0.9" opacity="0.6"/>
<path d="M561.3,275.1 L555.3,263.6 L547.7,253.0" fill="none" stroke="#eba595" stroke-width="0.9" opacity="0.6"/>
<path d="M385.1,494.1 L386.6,481.2 L384.7,468.3 L384.0,455.4 L380.8,442.8 L376.1,430.6" fill="none" stroke="#eba595" stroke-width="0.9" opacity="0.6"/>
<path d="M516.6,98.6 L522.6,87.1 L527.5,75.0 L526.3,62.1" fill="none" stroke="#eba595" stroke-width="0.9" opacity="0.6"/>
<path d="M230.8,7.4 L218.2,10.7 L205.3,11.7 L192.7,15.1 L180.1,18.3 L170.6,27.2" fill="none" stroke="#eba595" stroke-width="0.9" opacity="0.6"/>
<path d="M402.3,260.6 L412.8,252.9 L425.3,249.4" fill="none" stroke="#eba595" stroke-width="0.9" opacity="0.6"/>
<path d="M428.3,418.6 L441.3,418.8 L454.1,421.0 L466.3,425.5 L479.0,422.6 L491.9,423.5" fill="none" stroke="#eba595" stroke-width="0.9" opacity="0.6"/>
<path d="M977.3,445.6 L970.8,434.3 L966.2,422.1 L957.1,412.9" fill="none" stroke="#eba595" stroke-width="0.9" opacity="0.6"/>
<path d="M671.6,282.7 L684.5,284.0 L696.4,278.6 L705.6,269.4" fill="none" stroke="#eba595" stroke-width="0.9" opacity="0.6"/>
<path d="M1029.3,448.6 L1040.8,454.8 L1053.4,458.0" fill="none" stroke="#eba595" stroke-width="0.9" opacity="0.6"/>
<path d="M553.6,227.9 L563.2,219.1 L570.1,208.1 L572.8,195.4 L573.5,182.4" fill="none" stroke="#eba595" stroke-width="0.9" opacity="0.6"/>
<path d="M521.8,251.8 L525.4,264.3 L529.2,276.7" fill="none" stroke="#eba595" stroke-width="0.9" opacity="0.6"/>
<path d="M334.1,381.8 L342.0,371.5 L353.6,365.5 L364.2,358.0 L368.6,345.8 L370.6,333.0" fill="none" stroke="#eba595" stroke-width="0.9" opacity="0.6"/>
<path d="M726.3,27.1 L713.7,24.1 L703.2,16.3 L690.2,16.7 L679.8,24.4 L668.2,30.3" fill="none" stroke="#eba595" stroke-width="0.9" opacity="0.6"/>
<path d="M983.4,54.8 L994.6,61.4 L1002.0,72.1 L1004.5,84.8 L1003.6,97.8 L998.8,109.9" fill="none" stroke="#eba595" stroke-width="0.9" opacity="0.6"/>
<path d="M314.0,416.5 L301.3,413.7 L292.0,404.7 L280.3,398.9 L272.2,388.8" fill="none" stroke="#eba595" stroke-width="0.9" opacity="0.6"/>
<path d="M1306.3,104.2 L1308.5,117.0 L1318.0,125.8 L1330.4,129.7" fill="none" stroke="#eba595" stroke-width="0.9" opacity="0.6"/>
<path d="M228.9,468.2 L218.7,460.2 L212.4,448.8 L201.2,442.3 L190.2,435.3 L180.8,426.4" fill="none" stroke="#eba595" stroke-width="0.9" opacity="0.6"/>
<path d="M510.9,436.5 L497.9,436.5 L484.9,435.8" fill="none" stroke="#eba595" stroke-width="0.9" opacity="0.6"/>
<path d="M1216.4,369.0 L1203.5,370.5 L1190.5,370.7 L1177.7,373.4" fill="none" stroke="#eba595" stroke-width="0.9" opacity="0.6"/>
<path d="M628.0,88.4 L623.9,76.1 L620.0,63.7" fill="none" stroke="#eba595" stroke-width="0.9" opacity="0.6"/>
<path d="M440.3,483.0 L451.8,476.9 L464.6,475.0 L475.8,468.4 L484.7,458.9" fill="none" stroke="#eba595" stroke-width="0.9" opacity="0.6"/>
<path d="M888.4,208.8 L885.8,221.6 L888.1,234.4" fill="none" stroke="#eba595" stroke-width="0.9" opacity="0.6"/>
<path d="M927.4,11.1 L940.0,7.8 L952.7,4.9 L965.4,2.6 L977.9,-1.2" fill="none" stroke="#eba595" stroke-width="0.9" opacity="0.6"/>
<path d="M427.6,66.9 L424.4,79.5 L429.8,91.3 L429.9,104.3 L426.2,116.8 L423.4,129.5" fill="none" stroke="#eba595" stroke-width="0.9" opacity="0.6"/>
<path d="M945.0,134.9 L941.9,122.2 L944.7,109.5" fill="none" stroke="#eba595" stroke-width="0.9" opacity="0.6"/>
<path d="M1267.6,297.4 L1254.7,295.5 L1244.8,287.1 L1231.9,286.2 L1218.9,284.8 L1205.9,285.0" fill="none" stroke="#eba595" stroke-width="0.9" opacity="0.6"/>
<path d="M337.5,29.2 L341.8,16.9 L348.7,5.9" fill="none" stroke="#eba595" stroke-width="0.9" opacity="0.6"/>
<path d="M919.6,207.6 L906.7,206.3 L894.1,202.8 L886.8,192.1 L883.1,179.6" fill="none" stroke="#eba595" stroke-width="0.9" opacity="0.6"/>
<path d="M678.7,269.2 L666.9,274.8 L655.4,280.9 L642.6,282.8 L629.9,285.6 L619.2,293.0" fill="none" stroke="#eba595" stroke-width="0.9" opacity="0.6"/>
<path d="M1200.4,355.8 L1195.8,368.0 L1185.3,375.6 L1172.3,375.2" fill="none" stroke="#eba595" stroke-width="0.9" opacity="0.6"/>
<path d="M1318.6,447.1 L1331.5,448.1 L1342.0,455.8" fill="none" stroke="#eba595" stroke-width="0.9" opacity="0.6"/>
<path d="M1195.2,101.4 L1206.2,108.4 L1218.1,113.6 L1229.2,120.5 L1241.2,125.4" fill="none" stroke="#eba595" stroke-width="0.9" opacity="0.6"/>
<path d="M1394.0,420.8 L1384.0,412.3 L1376.8,401.5 L1375.6,388.6 L1373.4,375.8 L1375.1,362.9" fill="none" stroke="#eba595" stroke-width="0.9" opacity="0.6"/>
<path d="M809.9,153.9 L811.8,166.7 L819.2,177.4" fill="none" stroke="#eba595" stroke-width="0.9" opacity="0.6"/>
<path d="M883.2,80.9 L892.3,71.6 L895.7,59.0" fill="none" stroke="#eba595" stroke-width="0.9" opacity="0.6"/>
<path d="M913.8,21.3 L926.6,19.0 L939.6,18.3" fill="none" stroke="#eba595" stroke-width="0.9" opacity="0.6"/>
<path d="M93.6,433.9 L99.7,422.4 L100.6,409.4 L94.7,397.8 L83.0,392.2 L75.2,381.8" fill="none" stroke="#eba595" stroke-width="0.9" opacity="0.6"/>
<path d="M1153.1,317.1 L1158.6,305.3 L1157.6,292.4 L1161.9,280.1 L1168.6,268.9" fill="none" stroke="#eba595" stroke-width="0.9" opacity="0.6"/>
<path d="M418.1,168.3 L421.6,180.8 L428.7,191.7 L432.2,204.2 L437.9,215.9" fill="none" stroke="#eba595" stroke-width="0.9" opacity="0.6"/>
<path d="M455.6,482.0 L442.8,479.6 L431.2,485.4 L420.4,492.6 L410.3,500.8" fill="none" stroke="#eba595" stroke-width="0.9" opacity="0.6"/>
<path d="M1097.7,173.4 L1097.9,160.4 L1103.8,148.8 L1110.9,137.9" fill="none" stroke="#eba595" stroke-width="0.9" opacity="0.6"/>
<path d="M407.7,218.0 L396.4,211.6 L391.5,199.6 L380.0,193.5 L368.5,187.5" fill="none" stroke="#eba595" stroke-width="0.9" opacity="0.6"/>
<path d="M493.0,415.9 L496.0,428.6 L503.8,439.0" fill="none" stroke="#eba595" stroke-width="0.9" opacity="0.6"/>
<path d="M707.6,55.0 L699.0,45.2 L698.5,32.3" fill="none" stroke="#eba595" stroke-width="0.9" opacity="0.6"/>
<path d="M797.0,52.3 L792.6,64.5 L790.1,77.3" fill="none" stroke="#eba595" stroke-width="0.9" opacity="0.6"/>
<path d="M1264.4,43.1 L1272.7,33.1 L1277.9,21.2" fill="none" stroke="#eba595" stroke-width="0.9" opacity="0.6"/>
<path d="M607.8,272.5 L606.2,285.4 L611.2,297.4 L614.6,309.9" fill="none" stroke="#eba595" stroke-width="0.9" opacity="0.6"/>
<path d="M639.4,276.9 L634.7,289.0 L625.7,298.4 L615.8,306.8 L611.4,319.0 L607.7,331.5" fill="none" stroke="#eba595" stroke-width="0.9" opacity="0.6"/>
<path d="M1256.9,119.0 L1257.0,132.0 L1251.4,143.7 L1243.9,154.3 L1233.6,162.2" fill="none" stroke="#eba595" stroke-width="0.9" opacity="0.6"/>
<path d="M1384.2,361.6 L1371.4,359.4 L1358.4,360.3 L1347.0,366.5 L1334.2,364.4" fill="none" stroke="#eba595" stroke-width="0.9" opacity="0.6"/>
<path d="M1034.8,50.9 L1045.0,42.9 L1050.3,31.0" fill="none" stroke="#eba595" stroke-width="0.9" opacity="0.6"/>
<path d="M422.3,136.9 L434.4,141.7 L442.3,152.1" fill="none" stroke="#eba595" stroke-width="0.9" opacity="0.6"/>
<path d="M658.8,6.3 L669.2,-1.5 L679.5,-9.3 L691.2,-15.1 L702.6,-21.4 L709.4,-32.4" fill="none" stroke="#eba595" stroke-width="0.9" opacity="0.6"/>
<path d="M857.3,202.4 L860.2,189.7 L864.6,177.5 L871.4,166.4 L882.6,159.8 L895.0,156.0" fill="none" stroke="#eba595" stroke-width="0.9" opacity="0.6"/>
<path d="M926.5,438.8 L921.1,427.0 L918.1,414.3 L914.4,401.9" fill="none" stroke="#eba595" stroke-width="0.9" opacity="0.6"/>
<path d="M444.5,314.1 L457.1,317.4 L470.0,318.9 L481.9,324.1 L494.9,323.2 L506.7,328.5" fill="none" stroke="#eba595" stroke-width="0.9" opacity="0.6"/>
<path d="M685.5,9.8 L697.8,5.5 L708.7,-1.6 L712.6,-13.9" fill="none" stroke="#eba595" stroke-width="0.9" opacity="0.6"/>
<path d="M309.4,358.1 L321.9,354.5 L330.6,344.9 L340.2,336.2" fill="none" stroke="#eba595" stroke-width="0.9" opacity="0.6"/>
<path d="M1177.2,260.8 L1169.8,271.6 L1160.0,280.0 L1151.5,289.9 L1140.0,296.1 L1133.3,307.2" fill="none" stroke="#eba595" stroke-width="0.9" opacity="0.6"/>
<path d="M1397.9,177.7 L1410.7,180.2 L1422.6,174.9 L1429.4,163.8 L1441.2,158.3" fill="none" stroke="#eba595" stroke-width="0.9" opacity="0.6"/>
<path d="M892.6,337.4 L879.7,335.9 L868.0,330.2" fill="none" stroke="#eba595" stroke-width="0.9" opacity="0.6"/>
<path d="M1334.7,263.5 L1337.9,276.1 L1346.5,285.9 L1348.0,298.8 L1356.5,308.6 L1360.4,321.0" fill="none" stroke="#eba595" stroke-width="0.9" opacity="0.6"/>
<path d="M1107.4,234.7 L1105.9,221.8 L1102.2,209.3 L1094.5,198.8" fill="none" stroke="#eba595" stroke-width="0.9" opacity="0.6"/>
<path d="M605.1,92.9 L617.9,90.6 L630.8,91.0 L643.5,88.2 L656.2,85.2" fill="none" stroke="#eba595" stroke-width="0.9" opacity="0.6"/>
<path d="M885.2,42.7 L898.2,42.1 L909.9,47.7 L922.7,45.5" fill="none" stroke="#eba595" stroke-width="0.9" opacity="0.6"/>
<path d="M1113.3,70.2 L1122.0,60.5 L1126.2,48.2" fill="none" stroke="#eba595" stroke-width="0.9" opacity="0.6"/>
<path d="M863.6,289.2 L874.9,282.7 L884.4,273.9 L888.8,261.6" fill="none" stroke="#eba595" stroke-width="0.9" opacity="0.6"/>
<path d="M1283.8,395.8 L1287.4,408.3 L1283.9,420.9" fill="none" stroke="#eba595" stroke-width="0.9" opacity="0.6"/>
<path d="M788.2,132.2 L790.0,145.1 L790.7,158.1 L791.7,171.1" fill="none" stroke="#eba595" stroke-width="0.9" opacity="0.6"/>
<path d="M1285.8,350.2 L1285.3,363.2 L1278.6,374.3 L1280.5,387.2" fill="none" stroke="#eba595" stroke-width="0.9" opacity="0.6"/>
<path d="M1193.9,234.0 L1185.5,224.0 L1175.5,215.7 L1164.7,208.6 L1160.3,196.4" fill="none" stroke="#eba595" stroke-width="0.9" opacity="0.6"/>
<path d="M903.3,14.3 L897.6,2.6 L886.6,-4.3 L875.4,-10.8 L867.2,-20.9" fill="none" stroke="#eba595" stroke-width="0.9" opacity="0.6"/>
<path d="M590.1,63.5 L602.3,68.2 L611.7,77.1 L620.4,86.8 L622.4,99.6" fill="none" stroke="#eba595" stroke-width="0.9" opacity="0.6"/>
<path d="M403.5,171.0 L397.6,182.6 L395.3,195.4" fill="none" stroke="#eba595" stroke-width="0.9" opacity="0.6"/>
<path d="M1175.4,201.9 L1164.3,195.1 L1152.0,190.9 L1139.0,192.1 L1126.1,193.3" fill="none" stroke="#eba595" stroke-width="0.9" opacity="0.6"/>
<path d="M1012.7,63.8 L1025.4,66.7 L1037.3,61.4" fill="none" stroke="#eba595" stroke-width="0.9" opacity="0.6"/>
<path d="M1026.2,442.8 L1013.3,440.9 L1001.4,446.1" fill="none" stroke="#eba595" stroke-width="0.9" opacity="0.6"/>
<path d="M65.9,411.0 L53.3,407.8 L44.4,398.3" fill="none" stroke="#eba595" stroke-width="0.9" opacity="0.6"/>
<path d="M868.7,308.3 L856.7,303.4 L846.1,295.7" fill="none" stroke="#eba595" stroke-width="0.9" opacity="0.6"/>
<path d="M52.5,387.3 L62.3,378.7 L74.8,375.2" fill="none" stroke="#eba595" stroke-width="0.9" opacity="0.6"/>
<path d="M1116.9,281.1 L1121.8,293.1 L1133.1,299.6 L1145.9,297.8 L1158.9,297.1" fill="none" stroke="#eba595" stroke-width="0.9" opacity="0.6"/>
<path d="M706.8,261.1 L713.9,250.2 L725.8,245.0 L737.3,238.9 L742.5,227.0 L745.6,214.4" fill="none" stroke="#eba595" stroke-width="0.9" opacity="0.6"/>
<path d="M1392.7,237.7 L1387.2,249.5 L1382.2,261.5" fill="none" stroke="#eba595" stroke-width="0.9" opacity="0.6"/>
<path d="M1272.0,313.4 L1259.3,316.0 L1249.6,324.7" fill="none" stroke="#eba595" stroke-width="0.9" opacity="0.6"/>
<path d="M1372.2,44.1 L1380.7,34.2 L1385.7,22.2 L1391.9,10.8" fill="none" stroke="#eba595" stroke-width="0.9" opacity="0.6"/>
<path d="M1310.4,182.9 L1314.3,170.5 L1310.7,158.0 L1309.4,145.1" fill="none" stroke="#eba595" stroke-width="0.9" opacity="0.6"/>
<path d="M86.0,441.7 L79.1,430.6 L69.7,421.7" fill="none" stroke="#eba595" stroke-width="0.9" opacity="0.6"/>
<path d="M1185.6,304.5 L1180.8,316.6 L1182.0,329.5 L1175.1,340.5 L1174.8,353.5 L1166.9,363.8" fill="none" stroke="#eba595" stroke-width="0.9" opacity="0.6"/>
<path d="M232.9,400.9 L221.4,394.9 L213.1,385.0 L205.7,374.2 L195.6,366.1 L182.6,365.2" fill="none" stroke="#eba595" stroke-width="0.9" opacity="0.6"/>
<path d="M1383.0,351.6 L1394.0,344.6 L1406.6,341.4 L1414.3,331.0 L1416.3,318.2" fill="none" stroke="#eba595" stroke-width="0.9" opacity="0.6"/>
<path d="M1182.3,292.3 L1194.7,288.2 L1207.6,287.4 L1220.6,288.5" fill="none" stroke="#eba595" stroke-width="0.9" opacity="0.6"/>
<path d="M1272.5,403.7 L1273.0,416.7 L1277.7,428.9" fill="none" stroke="#eba595" stroke-width="0.9" opacity="0.6"/>
<path d="M223.3,460.3 L220.6,447.6 L212.1,437.8" fill="none" stroke="#eba595" stroke-width="0.9" opacity="0.6"/>
<path d="M1264.7,496.4 L1274.5,504.9 L1287.4,506.5 L1300.2,509.2 L1310.7,516.7 L1323.5,519.3" fill="none" stroke="#eba595" stroke-width="0.9" opacity="0.6"/>
<path d="M1065.3,465.9 L1063.3,478.7 L1062.0,491.7" fill="none" stroke="#eba595" stroke-width="0.9" opacity="0.6"/>
<path d="M293.4,127.4 L292.7,114.4 L285.1,103.9 L282.5,91.1 L284.9,78.3 L282.5,65.6" fill="none" stroke="#eba595" stroke-width="0.9" opacity="0.6"/>
<path d="M1256.8,260.9 L1246.0,268.1 L1239.1,279.1 L1237.7,292.0" fill="none" stroke="#eba595" stroke-width="0.9" opacity="0.6"/>
<path d="M995.5,181.4 L986.4,172.1 L982.9,159.6 L975.2,149.1 L974.7,136.1 L974.1,123.1" fill="none" stroke="#eba595" stroke-width="0.9" opacity="0.6"/>
<path d="M1230.2,185.8 L1220.4,194.3 L1209.5,201.4" fill="none" stroke="#eba595" stroke-width="0.9" opacity="0.6"/>
<path d="M489.8,259.7 L502.3,256.1 L514.9,259.1" fill="none" stroke="#eba595" stroke-width="0.9" opacity="0.6"/>
<path d="M1344.0,383.6 L1345.2,370.7 L1338.3,359.7 L1327.5,352.4" fill="none" stroke="#eba595" stroke-width="0.9" opacity="0.6"/>
<path d="M256.6,41.8 L265.3,51.5 L274.6,60.7 L276.7,73.5 L271.5,85.4" fill="none" stroke="#eba595" stroke-width="0.9" opacity="0.6"/>
<path d="M564.3,60.0 L575.7,53.6 L583.9,43.6 L585.4,30.7 L593.8,20.7" fill="none" stroke="#eba595" stroke-width="0.9" opacity="0.6"/>
<path d="M719.2,91.3 L731.7,87.6 L743.7,92.6 L756.7,92.7 L767.1,84.9" fill="none" stroke="#eba595" stroke-width="0.9" opacity="0.6"/>
<path d="M363.3,176.0 L376.2,174.2 L385.5,165.1" fill="none" stroke="#eba595" stroke-width="0.9" opacity="0.6"/>
<path d="M1072.0,469.7 L1067.8,457.4 L1062.5,445.5" fill="none" stroke="#eba595" stroke-width="0.9" opacity="0.6"/>
<path d="M668.4,185.8 L658.6,194.4 L653.7,206.4 L653.4,219.4 L659.3,231.0" fill="none" stroke="#eba595" stroke-width="0.9" opacity="0.6"/>
<path d="M962.3,6.3 L965.0,-6.4 L961.6,-18.9 L964.1,-31.7" fill="none" stroke="#eba595" stroke-width="0.9" opacity="0.6"/>
<path d="M1105.2,479.0 L1118.2,479.2" fill="none" stroke="#eba595" stroke-width="0.9" opacity="0.6"/>
<path d="M642.3,169.9 L641.3,156.9 L637.9,144.4 L631.6,133.0 L629.4,120.2 L621.8,109.6" fill="none" stroke="#eba595" stroke-width="0.9" opacity="0.6"/>
<path d="M623.3,74.7 L616.3,85.6 L613.0,98.2 L604.3,107.9" fill="none" stroke="#eba595" stroke-width="0.9" opacity="0.6"/>
<path d="M475.0,83.9 L462.1,85.4 L449.2,87.3 L438.7,94.9 L428.0,102.3" fill="none" stroke="#eba595" stroke-width="0.9" opacity="0.6"/>
<path d="M896.0,393.8 L909.0,393.8 L920.2,387.2 L933.0,384.9 L944.5,390.9 L956.6,395.8" fill="none" stroke="#eba595" stroke-width="0.9" opacity="0.6"/>
<path d="M371.4,119.3 L376.1,131.5 L373.7,144.2 L379.1,156.0 L380.6,168.9 L385.8,180.9" fill="none" stroke="#eba595" stroke-width="0.9" opacity="0.6"/>
<path d="M1389.7,8.0 L1394.4,-4.1 L1398.2,-16.5 L1406.5,-26.5 L1419.1,-29.7" fill="none" stroke="#eba595" stroke-width="0.9" opacity="0.6"/>
<path d="M406.7,180.0 L419.6,178.2 L432.5,177.7 L443.6,171.0 L450.7,160.1 L461.3,152.6" fill="none" stroke="#eba595" stroke-width="0.9" opacity="0.6"/>
<path d="M1010.5,98.4 L1017.0,109.6 L1019.7,122.3" fill="none" stroke="#eba595" stroke-width="0.9" opacity="0.6"/>
<path d="M1081.0,87.7 L1088.3,98.4 L1099.3,105.3 L1112.3,104.7" fill="none" stroke="#eba595" stroke-width="0.9" opacity="0.6"/>
<path d="M1040.5,204.1 L1038.5,191.2 L1033.8,179.1" fill="none" stroke="#eba595" stroke-width="0.9" opacity="0.6"/>
<path d="M400.1,319.6 L406.9,308.5 L418.6,302.9" fill="none" stroke="#eba595" stroke-width="0.9" opacity="0.6"/>
<path d="M378.1,93.0 L376.3,80.1 L378.2,67.3 L381.5,54.7 L390.4,45.2" fill="none" stroke="#eba595" stroke-width="0.9" opacity="0.6"/>
<path d="M1375.6,35.7 L1363.9,41.4 L1351.0,40.7 L1338.2,43.2" fill="none" stroke="#eba595" stroke-width="0.9" opacity="0.6"/>
<path d="M1009.9,190.7 L1006.2,178.2 L996.6,169.5" fill="none" stroke="#eba595" stroke-width="0.9" opacity="0.6"/>
<path d="M1037.9,223.2 L1049.3,216.9 L1062.2,218.7 L1074.8,215.6" fill="none" stroke="#eba595" stroke-width="0.9" opacity="0.6"/>
<path d="M259.0,51.3 L267.1,61.5 L268.0,74.5" fill="none" stroke="#eba595" stroke-width="0.9" opacity="0.6"/>
<path d="M1049.0,130.7 L1056.2,119.8 L1066.0,111.4 L1070.0,99.0 L1079.5,90.2 L1091.3,84.6" fill="none" stroke="#eba595" stroke-width="0.9" opacity="0.6"/>
<path d="M700.9,250.4 L705.3,262.6 L702.8,275.4" fill="none" stroke="#eba595" stroke-width="0.9" opacity="0.6"/>
<path d="M769.1,113.7 L766.5,126.5 L769.9,139.0 L767.5,151.8 L758.2,160.8 L750.4,171.2" fill="none" stroke="#eba595" stroke-width="0.9" opacity="0.6"/>
<path d="M746.4,197.8 L757.1,190.5 L764.6,179.9 L769.4,167.8 L773.2,155.4" fill="none" stroke="#eba595" stroke-width="0.9" opacity="0.6"/>
<path d="M1393.3,402.2 L1406.3,401.4 L1416.4,393.1 L1426.6,385.2 L1439.6,384.9 L1450.4,392.1" fill="none" stroke="#eba595" stroke-width="0.9" opacity="0.6"/>
<path d="M354.0,211.1 L341.5,207.4 L328.7,209.4 L316.7,214.4" fill="none" stroke="#eba595" stroke-width="0.9" opacity="0.6"/>
<path d="M950.2,112.7 L937.3,114.2 L925.9,107.9 L915.8,99.7 L910.1,88.0 L911.3,75.0" fill="none" stroke="#eba595" stroke-width="0.9" opacity="0.6"/>
<path d="M1256.2,17.2 L1254.9,4.2 L1255.9,-8.7 L1259.2,-21.3 L1267.5,-31.4" fill="none" stroke="#eba595" stroke-width="0.9" opacity="0.6"/>
<path d="M172.8,6.8 L177.7,18.9 L185.6,29.2" fill="none" stroke="#eba595" stroke-width="0.9" opacity="0.6"/>
<path d="M919.5,60.2 L906.5,60.1 L893.6,58.3 L884.0,49.5 L873.7,41.6" fill="none" stroke="#eba595" stroke-width="0.9" opacity="0.6"/>
<path d="M1300.1,288.7 L1294.0,300.2 L1291.6,312.9" fill="none" stroke="#eba595" stroke-width="0.9" opacity="0.6"/>
<path d="M644.9,347.4 L652.2,358.2" fill="none" stroke="#eba595" stroke-width="0.9" opacity="0.6"/>
<path d="M654.5,274.0 L649.2,262.1 L637.8,255.9 L625.2,252.5 L612.4,254.7 L599.5,256.1" fill="none" stroke="#eba595" stroke-width="0.9" opacity="0.6"/>
<path d="M1376.8,198.2 L1389.8,198.6 L1402.1,194.3 L1414.7,191.0" fill="none" stroke="#eba595" stroke-width="0.9" opacity="0.6"/>
<path d="M697.8,142.4 L707.7,134.0 L710.4,121.3 L713.9,108.8 L719.2,96.9" fill="none" stroke="#eba595" stroke-width="0.9" opacity="0.6"/>
<path d="M494.2,328.9 L481.2,330.1 L468.7,326.7 L456.3,322.8 L449.1,312.0 L444.8,299.7" fill="none" stroke="#eba595" stroke-width="0.9" opacity="0.6"/>
<path d="M1326.2,208.4 L1322.8,195.8 L1321.4,182.9 L1326.3,170.9" fill="none" stroke="#eba595" stroke-width="0.9" opacity="0.6"/>
<path d="M1166.1,258.9 L1161.1,246.9 L1158.4,234.2 L1158.0,221.2 L1161.3,208.6 L1163.1,195.7" fill="none" stroke="#eba595" stroke-width="0.9" opacity="0.6"/>
<path d="M780.9,58.7 L771.5,67.7 L759.3,72.3 L746.5,70.2" fill="none" stroke="#eba595" stroke-width="0.9" opacity="0.6"/>
<path d="M862.4,189.8 L851.7,197.1 L842.6,206.4 L835.7,217.4 L828.4,228.2 L819.7,237.8" fill="none" stroke="#eba595" stroke-width="0.9" opacity="0.6"/>
<path d="M920.4,3.4 L917.9,-9.4 L912.0,-20.9 L906.7,-32.8 L906.7,-45.8 L905.6,-58.8" fill="none" stroke="#eba595" stroke-width="0.9" opacity="0.6"/>
<path d="M535.3,116.0 L538.0,103.2 L546.2,93.2 L558.1,87.9 L570.7,90.9" fill="none" stroke="#eba595" stroke-width="0.9" opacity="0.6"/>
<path d="M1293.0,5.3 L1306.0,5.6 L1319.0,6.5 L1331.7,4.0 L1344.7,3.6 L1357.6,2.2" fill="none" stroke="#eba595" stroke-width="0.9" opacity="0.6"/>
<path d="M844.5,175.6 L857.0,171.8 L865.5,162.0" fill="none" stroke="#eba595" stroke-width="0.9" opacity="0.6"/>
<path d="M531.7,200.4 L523.8,190.1 L523.7,177.1 L523.4,164.1" fill="none" stroke="#eba595" stroke-width="0.9" opacity="0.6"/>
<path d="M625.0,312.3 L637.6,315.4 L648.5,322.7 L661.5,322.9 L674.3,320.6" fill="none" stroke="#eba595" stroke-width="0.9" opacity="0.6"/>
<path d="M520.7,37.5 L522.8,50.4 L517.9,62.4 L510.0,72.7" fill="none" stroke="#eba595" stroke-width="0.9" opacity="0.6"/>
<path d="M1261.2,210.4 L1263.0,223.3 L1269.9,234.4 L1269.9,247.4 L1271.6,260.3" fill="none" stroke="#eba595" stroke-width="0.9" opacity="0.6"/>
<path d="M896.5,361.4 L896.9,348.4 L893.9,335.8" fill="none" stroke="#eba595" stroke-width="0.9" opacity="0.6"/>
<path d="M980.8,2.0 L975.0,13.6 L966.6,23.5" fill="none" stroke="#eba595" stroke-width="0.9" opacity="0.6"/>
<path d="M785.6,133.0 L778.9,121.9 L770.8,111.7 L758.7,107.0" fill="none" stroke="#eba595" stroke-width="0.9" opacity="0.6"/>
<path d="M222.6,379.7 L235.6,380.7 L245.5,389.2" fill="none" stroke="#eba595" stroke-width="0.9" opacity="0.6"/>
<path d="M696.4,233.8 L683.7,236.7 L670.7,236.2" fill="none" stroke="#eba595" stroke-width="0.9" opacity="0.6"/>
<path d="M822.0,72.0 L828.6,83.1 L838.5,91.6 L851.3,93.5 L861.2,102.0" fill="none" stroke="#eba595" stroke-width="0.9" opacity="0.6"/>
<path d="M826.8,174.4 L819.7,185.3 L817.2,198.1 L816.6,211.1 L811.4,222.9 L814.2,235.6" fill="none" stroke="#eba595" stroke-width="0.9" opacity="0.6"/>
<path d="M316.5,79.7 L304.0,76.0 L295.4,66.3 L291.8,53.8" fill="none" stroke="#eba595" stroke-width="0.9" opacity="0.6"/>
<path d="M431.2,301.3 L443.1,306.6 L455.9,304.2 L468.8,305.0 L481.2,308.9 L493.1,314.3" fill="none" stroke="#eba595" stroke-width="0.9" opacity="0.6"/>
<path d="M587.2,199.3 L589.4,186.5 L586.9,173.7" fill="none" stroke="#eba595" stroke-width="0.9" opacity="0.6"/>
<path d="M264.9,485.8 L268.5,498.3 L271.6,510.9 L276.6,522.9 L283.2,534.1" fill="none" stroke="#eba595" stroke-width="0.9" opacity="0.6"/>
<path d="M1172.7,175.6 L1173.7,188.6 L1177.5,201.0 L1182.4,213.1" fill="none" stroke="#eba595" stroke-width="0.9" opacity="0.6"/>
<path d="M396.4,12.6 L404.1,2.2 L404.9,-10.8 L401.5,-23.4" fill="none" stroke="#eba595" stroke-width="0.9" opacity="0.6"/>
<path d="M1185.7,63.9 L1177.0,73.5 L1170.4,84.7 L1160.7,93.4" fill="none" stroke="#eba595" stroke-width="0.9" opacity="0.6"/>
<path d="M295.4,475.5 L284.2,468.9 L275.0,459.8 L272.7,447.0" fill="none" stroke="#eba595" stroke-width="0.9" opacity="0.6"/>
<path d="M1417.0,298.0 L1404.7,302.1 L1393.1,307.9 L1381.4,313.5 L1374.0,324.3" fill="none" stroke="#eba595" stroke-width="0.9" opacity="0.6"/>
<path d="M129.9,425.9 L121.0,416.4 L115.5,404.7 L105.0,397.0 L92.0,397.6 L79.4,394.4" fill="none" stroke="#eba595" stroke-width="0.9" opacity="0.6"/>
<path d="M986.4,388.1 L985.0,401.0 L990.5,412.8 L994.9,425.0" fill="none" stroke="#eba595" stroke-width="0.9" opacity="0.6"/>
<path d="M513.3,250.2 L506.0,260.9 L505.6,273.9" fill="none" stroke="#eba595" stroke-width="0.9" opacity="0.6"/>
<path d="M409.8,408.4 L400.4,417.5 L387.7,420.0 L374.9,417.6 L365.2,409.0" fill="none" stroke="#eba595" stroke-width="0.9" opacity="0.6"/>
<path d="M1223.0,66.1 L1223.3,79.1 L1218.2,91.1" fill="none" stroke="#eba595" stroke-width="0.9" opacity="0.6"/>
<path d="M981.2,448.5 L993.9,446.0 L1006.4,449.7 L1019.3,450.8 L1031.9,454.2 L1044.6,451.9" fill="none" stroke="#eba595" stroke-width="0.9" opacity="0.6"/>
<path d="M163.6,456.3 L160.6,443.7 L159.6,430.7" fill="none" stroke="#eba595" stroke-width="0.9" opacity="0.6"/>
<path d="M221.8,369.2 L209.9,363.9 L196.9,363.4 L183.9,362.9" fill="none" stroke="#eba595" stroke-width="0.9" opacity="0.6"/>
<path d="M1328.7,55.9 L1336.5,45.6 L1348.5,40.5 L1361.0,36.9 L1374.0,36.9" fill="none" stroke="#eba595" stroke-width="0.9" opacity="0.6"/>
<path d="M1383.3,340.5 L1396.1,338.3 L1408.0,343.5 L1417.5,352.4 L1430.2,354.7" fill="none" stroke="#eba595" stroke-width="0.9" opacity="0.6"/>
<path d="M986.4,196.8 L982.3,184.5 L972.2,176.4 L968.7,163.8" fill="none" stroke="#eba595" stroke-width="0.9" opacity="0.6"/>
<path d="M982.1,369.3 L988.5,358.0" fill="none" stroke="#eba595" stroke-width="0.9" opacity="0.6"/>
<path d="M997.9,402.9 L989.2,412.6 L978.9,420.5 L968.1,427.7" fill="none" stroke="#eba595" stroke-width="0.9" opacity="0.6"/>
<path d="M354.6,29.7 L353.2,42.6 L349.4,55.0 L352.1,67.8 L351.4,80.7 L351.0,93.7" fill="none" stroke="#eba595" stroke-width="0.9" opacity="0.6"/>
<path d="M8.3,345.8 L14.1,357.4 L24.8,364.8 L33.0,374.9 L39.9,385.9" fill="none" stroke="#eba595" stroke-width="0.9" opacity="0.6"/>
<path d="M341.9,314.7 L347.7,326.3 L358.1,334.1 L366.5,344.1 L373.3,355.1 L380.8,365.8" fill="none" stroke="#eba595" stroke-width="0.9" opacity="0.6"/>
<path d="M511.9,103.2 L524.8,104.6 L536.6,99.0 L546.4,90.6 L559.4,89.8" fill="none" stroke="#eba595" stroke-width="0.9" opacity="0.6"/>
<path d="M808.2,144.8 L795.9,148.9 L783.8,144.2" fill="none" stroke="#eba595" stroke-width="0.9" opacity="0.6"/>
<path d="M1065.6,42.0 L1056.7,32.5 L1047.7,23.2 L1037.8,14.7 L1025.3,11.2" fill="none" stroke="#eba595" stroke-width="0.9" opacity="0.6"/>
<path d="M771.2,4.2 L783.5,-0.0 L796.0,3.6 L807.4,9.8 L820.2,11.7" fill="none" stroke="#eba595" stroke-width="0.9" opacity="0.6"/>
<path d="M349.3,69.3 L359.7,77.2 L371.8,81.8 L384.8,80.8 L397.7,82.4 L408.4,89.7" fill="none" stroke="#eba595" stroke-width="0.9" opacity="0.6"/>
<path d="M1315.9,84.2 L1322.8,73.2 L1326.8,60.8 L1325.1,47.9 L1329.3,35.6" fill="none" stroke="#eba595" stroke-width="0.9" opacity="0.6"/>
<path d="M454.6,184.3 L445.5,175.0 L433.8,169.3 L421.0,171.5 L411.2,180.1" fill="none" stroke="#eba595" stroke-width="0.9" opacity="0.6"/>
<path d="M1419.8,201.6 L1432.2,205.6 L1444.6,209.5 L1457.4,207.3" fill="none" stroke="#eba595" stroke-width="0.9" opacity="0.6"/>
<path d="M425.4,290.6 L438.4,291.0 L451.4,290.4 L462.0,297.8" fill="none" stroke="#eba595" stroke-width="0.9" opacity="0.6"/>
<path d="M624.1,95.4 L614.5,86.6 L606.5,76.4" fill="none" stroke="#eba595" stroke-width="0.9" opacity="0.6"/>
<path d="M1183.6,255.6 L1189.2,267.4 L1194.6,279.2" fill="none" stroke="#eba595" stroke-width="0.9" opacity="0.6"/>
<path d="M598.1,169.3 L585.3,167.0 L572.9,170.7 L562.0,177.8" fill="none" stroke="#eba595" stroke-width="0.9" opacity="0.6"/>
<path d="M629.3,281.7 L622.2,292.6 L614.6,303.1 L606.6,313.4" fill="none" stroke="#eba595" stroke-width="0.9" opacity="0.6"/>
<path d="M608.3,267.3 L606.8,254.4 L613.3,243.2 L621.7,233.3" fill="none" stroke="#eba595" stroke-width="0.9" opacity="0.6"/>
<path d="M1151.8,30.0 L1147.1,17.9 L1141.1,6.4 L1133.1,-3.9 L1127.5,-15.6" fill="none" stroke="#eba595" stroke-width="0.9" opacity="0.6"/>
<path d="M194.3,432.6 L184.2,424.5 L171.7,420.8" fill="none" stroke="#eba595" stroke-width="0.9" opacity="0.6"/>
<path d="M511.2,120.1 L503.2,130.4 L500.4,143.1 L491.5,152.5 L481.9,161.3" fill="none" stroke="#eba595" stroke-width="0.9" opacity="0.6"/>
<path d="M159.4,431.1 L164.7,443.0 L167.0,455.8" fill="none" stroke="#eba595" stroke-width="0.9" opacity="0.6"/>
<path d="M1006.9,113.5 L993.9,112.6 L983.5,104.9" fill="none" stroke="#eba595" stroke-width="0.9" opacity="0.6"/>
<path d="M964.9,400.2 L971.7,411.3 L970.4,424.2" fill="none" stroke="#eba595" stroke-width="0.9" opacity="0.6"/>
<path d="M731.5,230.0 L734.8,217.4 L732.5,204.6 L729.7,191.9" fill="none" stroke="#eba595" stroke-width="0.9" opacity="0.6"/>
<path d="M878.7,202.2 L890.7,197.3 L903.3,194.1" fill="none" stroke="#eba595" stroke-width="0.9" opacity="0.6"/>
<path d="M302.6,150.0 L306.5,137.6 L303.0,125.0 L308.2,113.1 L308.2,100.1 L301.4,89.0" fill="none" stroke="#eba595" stroke-width="0.9" opacity="0.6"/>
<path d="M1034.1,177.3 L1022.1,182.5 L1009.2,183.5 L999.8,192.5 L994.0,204.2" fill="none" stroke="#eba595" stroke-width="0.9" opacity="0.6"/>
<path d="M339.8,256.6 L328.2,250.8 L315.4,253.0" fill="none" stroke="#eba595" stroke-width="0.9" opacity="0.6"/>
<path d="M1140.3,56.5 L1149.2,47.0 L1153.4,34.7 L1156.7,22.2" fill="none" stroke="#eba595" stroke-width="0.9" opacity="0.6"/>
<path d="M1190.2,290.7 L1200.2,299.0 L1213.1,300.3" fill="none" stroke="#eba595" stroke-width="0.9" opacity="0.6"/>
<path d="M367.0,75.1 L379.9,75.6 L392.8,77.7 L405.6,75.3 L416.9,81.6 L425.3,91.6" fill="none" stroke="#eba595" stroke-width="0.9" opacity="0.6"/>
<path d="M381.6,222.0 L394.5,223.8 L407.4,225.3 L418.5,218.6" fill="none" stroke="#eba595" stroke-width="0.9" opacity="0.6"/>
<path d="M1188.8,37.3 L1184.5,25.0 L1188.6,12.7 L1195.8,1.9 L1202.3,-9.4 L1204.1,-22.3" fill="none" stroke="#eba595" stroke-width="0.9" opacity="0.6"/>
<path d="M1360.2,258.5 L1354.8,270.3 L1355.9,283.3 L1354.7,296.2" fill="none" stroke="#eba595" stroke-width="0.9" opacity="0.6"/>
<path d="M300.2,409.6 L299.7,396.6 L297.2,383.8 L292.2,371.8 L280.7,365.8" fill="none" stroke="#eba595" stroke-width="0.9" opacity="0.6"/>
<path d="M822.4,166.9 L832.7,174.8 L841.7,184.2 L848.8,195.1 L852.2,207.6 L861.2,217.1" fill="none" stroke="#eba595" stroke-width="0.9" opacity="0.6"/>
<path d="M545.9,31.7 L558.9,32.3 L571.8,33.3 L581.6,41.9 L583.7,54.8" fill="none" stroke="#eba595" stroke-width="0.9" opacity="0.6"/>
<path d="M1099.5,316.6 L1095.5,304.2 L1096.7,291.3 L1093.2,278.7 L1095.0,265.9" fill="none" stroke="#eba595" stroke-width="0.9" opacity="0.6"/>
<path d="M200.4,36.0 L213.4,37.3 L226.3,38.8 L238.7,42.7 L251.6,44.0" fill="none" stroke="#eba595" stroke-width="0.9" opacity="0.6"/>
<path d="M782.1,203.0 L792.6,210.5 L797.9,222.4 L798.1,235.4 L798.2,248.4" fill="none" stroke="#eba595" stroke-width="0.9" opacity="0.6"/>
<path d="M1269.8,404.6 L1281.0,398.0 L1285.4,385.8 L1295.3,377.4" fill="none" stroke="#eba595" stroke-width="0.9" opacity="0.6"/>
<path d="M643.4,222.8 L636.8,211.6 L631.5,199.7 L621.2,191.8 L613.8,181.1" fill="none" stroke="#eba595" stroke-width="0.9" opacity="0.6"/>
<path d="M358.0,285.9 L346.0,280.9 L333.0,281.3 L322.0,274.4" fill="none" stroke="#eba595" stroke-width="0.9" opacity="0.6"/>
<path d="M432.0,176.7 L419.1,175.3 L409.1,167.0 L404.1,155.0 L396.2,144.7 L384.6,138.8" fill="none" stroke="#eba595" stroke-width="0.9" opacity="0.6"/>
<path d="M1274.8,273.2 L1270.7,260.9 L1259.9,253.7 L1246.9,254.4 L1234.0,255.9" fill="none" stroke="#eba595" stroke-width="0.9" opacity="0.6"/>
<path d="M1267.8,141.3 L1255.9,146.5 L1243.0,147.6" fill="none" stroke="#eba595" stroke-width="0.9" opacity="0.6"/>
<path d="M1367.7,300.5 L1376.7,309.9 L1389.6,311.3 L1402.3,308.6 L1415.3,308.5" fill="none" stroke="#eba595" stroke-width="0.9" opacity="0.6"/>
<path d="M1232.2,13.5 L1221.0,20.2 L1208.0,20.7 L1196.0,15.8 L1183.2,18.4" fill="none" stroke="#eba595" stroke-width="0.9" opacity="0.6"/>
<path d="M870.2,388.0 L882.1,382.7 L893.7,376.9 L899.0,365.0 L910.0,358.2 L921.7,352.3" fill="none" stroke="#eba595" stroke-width="0.9" opacity="0.6"/>
<path d="M1402.3,28.0 L1389.6,25.0 L1377.9,30.5 L1369.2,40.2 L1360.2,49.6" fill="none" stroke="#eba595" stroke-width="0.9" opacity="0.6"/>
<path d="M1193.7,178.9 L1184.7,188.4 L1174.7,196.7 L1164.1,204.2 L1152.1,209.1" fill="none" stroke="#eba595" stroke-width="0.9" opacity="0.6"/>
<path d="M854.2,165.4 L859.1,153.4 L863.6,141.2 L859.7,128.8 L858.4,115.8" fill="none" stroke="#eba595" stroke-width="0.9" opacity="0.6"/>
<path d="M513.1,264.8 L519.8,276.0 L526.8,286.9 L531.3,299.1 L530.9,312.1" fill="none" stroke="#eba595" stroke-width="0.9" opacity="0.6"/>
<path d="M324.0,378.3 L333.6,387.1 L346.3,389.8" fill="none" stroke="#eba595" stroke-width="0.9" opacity="0.6"/>
<path d="M771.4,102.5 L780.7,93.3 L788.0,82.6 L789.4,69.6 L785.0,57.4" fill="none" stroke="#eba595" stroke-width="0.9" opacity="0.6"/>
<path d="M1047.6,460.7 L1056.6,470.1 L1062.4,481.7" fill="none" stroke="#eba595" stroke-width="0.9" opacity="0.6"/>
<path d="M302.7,456.2 L312.8,448.0 L320.6,437.6 L332.8,433.1 L340.8,422.8 L351.6,415.7" fill="none" stroke="#eba595" stroke-width="0.9" opacity="0.6"/>
<path d="M1341.8,313.6 L1351.5,322.3 L1358.1,333.4 L1368.4,341.5 L1380.0,347.3" fill="none" stroke="#eba595" stroke-width="0.9" opacity="0.6"/>
<path d="M295,40 L350,45 L400,55 L450,60" fill="none" stroke="#eba0a6" stroke-width="1" opacity="0.8"/>
<path d="M150,38 L200,40 L250,40 L295,40" fill="none" stroke="#eba0a6" stroke-width="1" opacity="0.8"/>
<path d="M295,40 L300,70 L310,100 L330,140 L360,200 L380,240" fill="none" stroke="#eba0a6" stroke-width="1" opacity="0.8"/>
<path d="M295,40 L350,80 L380,110 L400,150 L420,200" fill="none" stroke="#eba0a6" stroke-width="1" opacity="0.8"/>
<path d="M380,240 L420,250 L470,270 L520,330 L560,350" fill="none" stroke="#eba0a6" stroke-width="1" opacity="0.8"/>
<path d="M450,60 L500,80 L550,70 L600,60 L660,40 L720,30" fill="none" stroke="#eba0a6" stroke-width="1" opacity="0.8"/>
<path d="M420,200 L480,190 L540,180 L600,185 L660,180 L700,170" fill="none" stroke="#eba0a6" stroke-width="1" opacity="0.8"/>
<path d="M600,185 L640,215 L660,240 L680,270 L710,300" fill="none" stroke="#eba0a6" stroke-width="1" opacity="0.8"/>
<path d="M690,100 L670,140 L660,180" fill="none" stroke="#eba0a6" stroke-width="1" opacity="0.8"/>
<path d="M590,330 L610,300 L640,270 L660,240" fill="none" stroke="#eba0a6" stroke-width="1" opacity="0.8"/>
<path d="M380,240 L400,300 L390,345" fill="none" stroke="#eba0a6" stroke-width="1" opacity="0.8"/>
<path d="M120,380 L200,390 L280,395 L330,410 L380,430 L430,440 L480,450 L530,445" fill="none" stroke="#eba0a6" stroke-width="1" opacity="0.8"/>
<path d="M100,345 L110,400 L115,460 L120,500" fill="none" stroke="#eba0a6" stroke-width="1" opacity="0.8"/>
<path d="M300,420 L280,460 L270,500" fill="none" stroke="#eba0a6" stroke-width="1" opacity="0.8"/>
<path d="M440,380 L500,440 L540,470" fill="none" stroke="#eba0a6" stroke-width="1" opacity="0.8"/>
<path d="M760,30 L800,80 L830,110 L850,140 L860,180 L880,220 L920,250 L960,270 L1000,300" fill="none" stroke="#eba0a6" stroke-width="1" opacity="0.8"/>
<path d="M960,270 L1000,250 L1060,230 L1120,210" fill="none" stroke="#eba0a6" stroke-width="1" opacity="0.8"/>
<path d="M870,210 L900,225 L940,230" fill="none" stroke="#eba0a6" stroke-width="1" opacity="0.8"/>
<path d="M790,280 L820,270 L870,250 L920,240 L960,270" fill="none" stroke="#eba0a6" stroke-width="1" opacity="0.8"/>
<path d="M900,290 L930,330 L950,380 L980,420 L1010,450" fill="none" stroke="#eba0a6" stroke-width="1" opacity="0.8"/>
<path d="M960,300 L990,340 L1010,380 L1030,420" fill="none" stroke="#eba0a6" stroke-width="1" opacity="0.8"/>
<path d="M1120,50 L1200,70 L1250,90 L1300,120 L1330,150 L1380,160" fill="none" stroke="#eba0a6" stroke-width="1" opacity="0.8"/>
<path d="M1220,70 L1240,100 L1260,140 L1280,180" fill="none" stroke="#eba0a6" stroke-width="1" opacity="0.8"/>
<path d="M1040,70 L1100,70 L1160,60 L1220,40 L1280,20" fill="none" stroke="#eba0a6" stroke-width="1" opacity="0.8"/>
<path d="M1310,180 L1360,220 L1400,260 L1430,300 L1450,340 L1470,380" fill="none" stroke="#eba0a6" stroke-width="1" opacity="0.8"/>
<path d="M1330,150 L1350,200 L1360,250 L1380,300" fill="none" stroke="#eba0a6" stroke-width="1" opacity="0.8"/>
<path d="M1200,150 L1250,180 L1300,200" fill="none" stroke="#eba0a6" stroke-width="1" opacity="0.8"/>
<path d="M880,40 L900,70 L930,90 L980,110" fill="none" stroke="#eba0a6" stroke-width="1" opacity="0.8"/>
<path d="M1110,360 L1150,370 L1200,390 L1250,400" fill="none" stroke="#eba0a6" stroke-width="1" opacity="0.8"/>
<path d="M620,120 L660,140 L700,150" fill="none" stroke="#eba0a6" stroke-width="1" opacity="0.8"/>
<path d="M540,30 L560,80 L580,130 L580,180" fill="none" stroke="#eba0a6" stroke-width="1" opacity="0.8"/>
<path d="M360,13 L386,17 L407,36 L399,64 L386,73 L369,101 L394,116 L414,137 L420,154 L456,152 L480,150 L489,133 L510,137 L531,133 L538,146 L548,154 L574,163 L587,167 L596,150 L609,150 L617,163 L645,150" fill="none" stroke="#c9b3cf" stroke-width="3" opacity="0.35" stroke-linejoin="round"/>
<path d="M360,13 L386,17 L407,36 L399,64 L386,73 L369,101 L394,116 L414,137 L420,154 L456,152 L480,150 L489,133 L510,137 L531,133 L538,146 L548,154 L574,163 L587,167 L596,150 L609,150 L617,163 L645,150" fill="none" stroke="#a492ad" stroke-width="1.1" opacity="0.75" stroke-linejoin="round"/>
<path d="M523,0 L521,21 L510,28 L497,32 L480,60 L470,90 L489,133" fill="none" stroke="#c9b3cf" stroke-width="3" opacity="0.35" stroke-linejoin="round"/>
<path d="M523,0 L521,21 L510,28 L497,32 L480,60 L470,90 L489,133" fill="none" stroke="#a492ad" stroke-width="1.1" opacity="0.75" stroke-linejoin="round"/>
<path d="M542,49 L574,49 L596,58 L606,75 L634,49 L660,56 L681,71" fill="none" stroke="#c9b3cf" stroke-width="3" opacity="0.35" stroke-linejoin="round"/>
<path d="M542,49 L574,49 L596,58 L606,75 L634,49 L660,56 L681,71" fill="none" stroke="#a492ad" stroke-width="1.1" opacity="0.75" stroke-linejoin="round"/>
<path d="M476,150 L480,171 L476,193 L489,225 L480,250 L470,290 L455,320 L420,330 L380,345" fill="none" stroke="#c9b3cf" stroke-width="3" opacity="0.35" stroke-linejoin="round"/>
<path d="M476,150 L480,171 L476,193 L489,225 L480,250 L470,290 L455,320 L420,330 L380,345" fill="none" stroke="#a492ad" stroke-width="1.1" opacity="0.75" stroke-linejoin="round"/>
<path d="M548,154 L560,200 L570,240 L590,270 L640,275 L677,250" fill="none" stroke="#c9b3cf" stroke-width="3" opacity="0.35" stroke-linejoin="round"/>
<path d="M548,154 L560,200 L570,240 L590,270 L640,275 L677,250" fill="none" stroke="#a492ad" stroke-width="1.1" opacity="0.75" stroke-linejoin="round"/>
<path d="M300,150 L330,120 L369,101" fill="none" stroke="#c9b3cf" stroke-width="3" opacity="0.35" stroke-linejoin="round"/>
<path d="M300,150 L330,120 L369,101" fill="none" stroke="#a492ad" stroke-width="1.1" opacity="0.75" stroke-linejoin="round"/>
<path d="M200,30 L240,50 L290,60 L300,90 L300,150" fill="none" stroke="#c9b3cf" stroke-width="3" opacity="0.35" stroke-linejoin="round"/>
<path d="M200,30 L240,50 L290,60 L300,90 L300,150" fill="none" stroke="#a492ad" stroke-width="1.1" opacity="0.75" stroke-linejoin="round"/>
<path d="M760,200 L800,210 L850,230 L880,250 L905,255 L930,230 L960,220 L977,210" fill="none" stroke="#c9b3cf" stroke-width="3" opacity="0.35" stroke-linejoin="round"/>
<path d="M760,200 L800,210 L850,230 L880,250 L905,255 L930,230 L960,220 L977,210" fill="none" stroke="#a492ad" stroke-width="1.1" opacity="0.75" stroke-linejoin="round"/>
<path d="M760,280 L800,260 L830,240 L850,230" fill="none" stroke="#c9b3cf" stroke-width="3" opacity="0.35" stroke-linejoin="round"/>
<path d="M760,280 L800,260 L830,240 L850,230" fill="none" stroke="#a492ad" stroke-width="1.1" opacity="0.75" stroke-linejoin="round"/>
<path d="M843,143 L860,170 L880,200 L905,210" fill="none" stroke="#c9b3cf" stroke-width="3" opacity="0.35" stroke-linejoin="round"/>
<path d="M843,143 L860,170 L880,200 L905,210" fill="none" stroke="#a492ad" stroke-width="1.1" opacity="0.75" stroke-linejoin="round"/>
<path d="M850,300 L880,320 L920,310 L950,300" fill="none" stroke="#c9b3cf" stroke-width="3" opacity="0.35" stroke-linejoin="round"/>
<path d="M850,300 L880,320 L920,310 L950,300" fill="none" stroke="#a492ad" stroke-width="1.1" opacity="0.75" stroke-linejoin="round"/>
<path d="M870,370 L900,360 L930,350 L960,360 L980,380" fill="none" stroke="#c9b3cf" stroke-width="3" opacity="0.35" stroke-linejoin="round"/>
<path d="M870,370 L900,360 L930,350 L960,360 L980,380" fill="none" stroke="#a492ad" stroke-width="1.1" opacity="0.75" stroke-linejoin="round"/>
<path d="M41,344 L47,370 L64,372 L96,370 L120,366 L139,361 L161,353 L169,370 L178,383 L182,387 L214,400 L225,417 L236,428 L257,432 L289,428 L300,443 L330,470 L360,500" fill="none" stroke="#c9b3cf" stroke-width="3" opacity="0.35" stroke-linejoin="round"/>
<path d="M41,344 L47,370 L64,372 L96,370 L120,366 L139,361 L161,353 L169,370 L178,383 L182,387 L214,400 L225,417 L236,428 L257,432 L289,428 L300,443 L330,470 L360,500" fill="none" stroke="#a492ad" stroke-width="1.1" opacity="0.75" stroke-linejoin="round"/>
<path d="M41,344 L56,400 L49,430 L36,443" fill="none" stroke="#c9b3cf" stroke-width="3" opacity="0.35" stroke-linejoin="round"/>
<path d="M41,344 L56,400 L49,430 L36,443" fill="none" stroke="#a492ad" stroke-width="1.1" opacity="0.75" stroke-linejoin="round"/>
<path d="M304,368 L321,400 L285,428 L276,464 L285,500" fill="none" stroke="#c9b3cf" stroke-width="3" opacity="0.35" stroke-linejoin="round"/>
<path d="M304,368 L321,400 L285,428 L276,464 L285,500" fill="none" stroke="#a492ad" stroke-width="1.1" opacity="0.75" stroke-linejoin="round"/>
<path d="M380,345 L390,380 L400,383" fill="none" stroke="#c9b3cf" stroke-width="3" opacity="0.35" stroke-linejoin="round"/>
<path d="M380,345 L390,380 L400,383" fill="none" stroke="#a492ad" stroke-width="1.1" opacity="0.75" stroke-linejoin="round"/>
<path d="M1160,20 L1180,60" fill="none" stroke="#c9b3cf" stroke-width="3" opacity="0.35" stroke-linejoin="round"/>
<path d="M1160,20 L1180,60" fill="none" stroke="#a492ad" stroke-width="1.1" opacity="0.75" stroke-linejoin="round"/>
<path d="M1200,70 L1215,95 L1225,117" fill="none" stroke="#c9b3cf" stroke-width="3" opacity="0.35" stroke-linejoin="round"/>
<path d="M1200,70 L1215,95 L1225,117" fill="none" stroke="#a492ad" stroke-width="1.1" opacity="0.75" stroke-linejoin="round"/>
<path d="M1330,280 L1350,300 L1380,320" fill="none" stroke="#c9b3cf" stroke-width="3" opacity="0.35" stroke-linejoin="round"/>
<path d="M1330,280 L1350,300 L1380,320" fill="none" stroke="#a492ad" stroke-width="1.1" opacity="0.75" stroke-linejoin="round"/>
<path d="M285,353 L304,368 L332,379 L360,383 L399,383 L431,398 L452,409 L489,411 L510,409" fill="none" stroke="#cbb6cf" stroke-width="4.5" opacity="0.45" stroke-linejoin="round"/>
<path d="M285,353 L304,368 L332,379 L360,383 L399,383 L431,398 L452,409 L489,411 L510,409" fill="none" stroke="#a08aad" stroke-width="1.3" opacity="0.85" stroke-linejoin="round"/>
<path d="M691,60 L681,75 L688,90 L671,111 L660,124 L645,150 L652,160 L674,165 L684,162 L674,181" fill="none" stroke="#cbb6cf" stroke-width="4.5" opacity="0.45" stroke-linejoin="round"/>
<path d="M691,60 L681,75 L688,90 L671,111 L660,124 L645,150 L652,160 L674,165 L684,162 L674,181" fill="none" stroke="#a08aad" stroke-width="1.3" opacity="0.85" stroke-linejoin="round"/>
<path d="M674,181 L684,198 L681,207 L694,225 L677,250 L681,271 L690,293 L714,301 L712,325" fill="none" stroke="#cbb6cf" stroke-width="4.5" opacity="0.45" stroke-linejoin="round"/>
<path d="M674,181 L684,198 L681,207 L694,225 L677,250 L681,271 L690,293 L714,301 L712,325" fill="none" stroke="#a08aad" stroke-width="1.3" opacity="0.85" stroke-linejoin="round"/>
<path d="M691,60 L731,69 L755,62 L772,69 L803,76 L812,79" fill="none" stroke="#cbb6cf" stroke-width="4.5" opacity="0.45" stroke-linejoin="round"/>
<path d="M691,60 L731,69 L755,62 L772,69 L803,76 L812,79" fill="none" stroke="#a08aad" stroke-width="1.3" opacity="0.85" stroke-linejoin="round"/>
<path d="M812,79 L803,95 L798,110 L815,119 L827,126 L843,119 L843,143" fill="none" stroke="#cbb6cf" stroke-width="4.5" opacity="0.45" stroke-linejoin="round"/>
<path d="M812,79 L803,95 L798,110 L815,119 L827,126 L843,119 L843,143" fill="none" stroke="#a08aad" stroke-width="1.3" opacity="0.85" stroke-linejoin="round"/>
<path d="M843,143 L827,143 L827,164 L812,157 L793,160 L789,150 L774,171 L765,176 L753,167 L743,155 L736,167 L724,179 L708,186 L689,188 L674,181" fill="none" stroke="#cbb6cf" stroke-width="4.5" opacity="0.45" stroke-linejoin="round"/>
<path d="M843,143 L827,143 L827,164 L812,157 L793,160 L789,150 L774,171 L765,176 L753,167 L743,155 L736,167 L724,179 L708,186 L689,188 L674,181" fill="none" stroke="#a08aad" stroke-width="1.3" opacity="0.85" stroke-linejoin="round"/>
<path d="M812,79 L831,79 L850,76 L869,81 L898,76 L922,69 L941,71 L955,81 L958,60 L946,38 L960,24 L979,14 L984,0" fill="none" stroke="#cbb6cf" stroke-width="4.5" opacity="0.45" stroke-linejoin="round"/>
<path d="M812,79 L831,79 L850,76 L869,81 L898,76 L922,69 L941,71 L955,81 L958,60 L946,38 L960,24 L979,14 L984,0" fill="none" stroke="#a08aad" stroke-width="1.3" opacity="0.85" stroke-linejoin="round"/>
<path d="M843,119 L862,129 L886,117 L910,112 L922,110 L927,124 L946,136 L970,140 L993,148 L1029,150 L1060,140 L1100,140 L1114,148" fill="none" stroke="#cbb6cf" stroke-width="4.5" opacity="0.45" stroke-linejoin="round"/>
<path d="M843,119 L862,129 L886,117 L910,112 L922,110 L927,124 L946,136 L970,140 L993,148 L1029,150 L1060,140 L1100,140 L1114,148" fill="none" stroke="#a08aad" stroke-width="1.3" opacity="0.85" stroke-linejoin="round"/>
<path d="M977,148 L979,167 L989,190 L993,208" fill="none" stroke="#cbb6cf" stroke-width="4.5" opacity="0.45" stroke-linejoin="round"/>
<path d="M977,148 L979,167 L989,190 L993,208" fill="none" stroke="#a08aad" stroke-width="1.3" opacity="0.85" stroke-linejoin="round"/>
<path d="M997,207 L1017,215 L1030,202 L1041,214 L1063,218 L1063,202 L1070,192 L1080,191 L1109,148" fill="none" stroke="#cbb6cf" stroke-width="4.5" opacity="0.45" stroke-linejoin="round"/>
<path d="M997,207 L1017,215 L1030,202 L1041,214 L1063,218 L1063,202 L1070,192 L1080,191 L1109,148" fill="none" stroke="#a08aad" stroke-width="1.3" opacity="0.85" stroke-linejoin="round"/>
<path d="M1114,148 L1099,116 L1116,101 L1120,64 L1141,64 L1150,49 L1180,64 L1223,60 L1223,43 L1253,34 L1296,17 L1317,9 L1349,21 L1377,17 L1386,34 L1420,54" fill="none" stroke="#cbb6cf" stroke-width="4.5" opacity="0.45" stroke-linejoin="round"/>
<path d="M1114,148 L1099,116 L1116,101 L1120,64 L1141,64 L1150,49 L1180,64 L1223,60 L1223,43 L1253,34 L1296,17 L1317,9 L1349,21 L1377,17 L1386,34 L1420,54" fill="none" stroke="#a08aad" stroke-width="1.3" opacity="0.85" stroke-linejoin="round"/>
<path d="M1150,49 L1146,43 L1139,17 L1135,0" fill="none" stroke="#cbb6cf" stroke-width="4.5" opacity="0.45" stroke-linejoin="round"/>
<path d="M1150,49 L1146,43 L1139,17 L1135,0" fill="none" stroke="#a08aad" stroke-width="1.3" opacity="0.85" stroke-linejoin="round"/>
<path d="M1377,64 L1360,101 L1345,133 L1334,156 L1296,169 L1264,171 L1242,180 L1225,188 L1189,195 L1156,184 L1135,158 L1114,148" fill="none" stroke="#cbb6cf" stroke-width="4.5" opacity="0.45" stroke-linejoin="round"/>
<path d="M1377,64 L1360,101 L1345,133 L1334,156 L1296,169 L1264,171 L1242,180 L1225,188 L1189,195 L1156,184 L1135,158 L1114,148" fill="none" stroke="#a08aad" stroke-width="1.3" opacity="0.85" stroke-linejoin="round"/>
<path d="M1386,34 L1377,64" fill="none" stroke="#cbb6cf" stroke-width="4.5" opacity="0.45" stroke-linejoin="round"/>
<path d="M1386,34 L1377,64" fill="none" stroke="#a08aad" stroke-width="1.3" opacity="0.85" stroke-linejoin="round"/>
<path d="M1285,169 L1313,203 L1317,221 L1343,236 L1347,250 L1370,262 L1392,250" fill="none" stroke="#cbb6cf" stroke-width="4.5" opacity="0.45" stroke-linejoin="round"/>
<path d="M1285,169 L1313,203 L1317,221 L1343,236 L1347,250 L1370,262 L1392,250" fill="none" stroke="#a08aad" stroke-width="1.3" opacity="0.85" stroke-linejoin="round"/>
<path d="M1225,188 L1231,214 L1249,233 L1231,240 L1189,238 L1160,235 L1137,229 L1114,238 L1094,232 L1084,234 L1063,218" fill="none" stroke="#cbb6cf" stroke-width="4.5" opacity="0.45" stroke-linejoin="round"/>
<path d="M1225,188 L1231,214 L1249,233 L1231,240 L1189,238 L1160,235 L1137,229 L1114,238 L1094,232 L1084,234 L1063,218" fill="none" stroke="#a08aad" stroke-width="1.3" opacity="0.85" stroke-linejoin="round"/>
<path d="M1084,234 L1084,259 L1099,274 L1106,295 L1120,309 L1141,331 L1156,352 L1167,374 L1184,383 L1199,398" fill="none" stroke="#cbb6cf" stroke-width="4.5" opacity="0.45" stroke-linejoin="round"/>
<path d="M1084,234 L1084,259 L1099,274 L1106,295 L1120,309 L1141,331 L1156,352 L1167,374 L1184,383 L1199,398" fill="none" stroke="#a08aad" stroke-width="1.3" opacity="0.85" stroke-linejoin="round"/>
<path d="M1242,250 L1238,282 L1257,308 L1246,314 L1253,336 L1242,344 L1229,342 L1227,357 L1210,370 L1206,389 L1199,398" fill="none" stroke="#cbb6cf" stroke-width="4.5" opacity="0.45" stroke-linejoin="round"/>
<path d="M1242,250 L1238,282 L1257,308 L1246,314 L1253,336 L1242,344 L1229,342 L1227,357 L1210,370 L1206,389 L1199,398" fill="none" stroke="#a08aad" stroke-width="1.3" opacity="0.85" stroke-linejoin="round"/>
<path d="M1242,342 L1264,361 L1294,379 L1306,366 L1330,379 L1356,396 L1349,413 L1336,421 L1306,432 L1296,421 L1279,387 L1266,400 L1249,421 L1251,443 L1257,456" fill="none" stroke="#cbb6cf" stroke-width="4.5" opacity="0.45" stroke-linejoin="round"/>
<path d="M1242,342 L1264,361 L1294,379 L1306,366 L1330,379 L1356,396 L1349,413 L1336,421 L1306,432 L1296,421 L1279,387 L1266,400 L1249,421 L1251,443 L1257,456" fill="none" stroke="#a08aad" stroke-width="1.3" opacity="0.85" stroke-linejoin="round"/>
<path d="M1392,250 L1388,282 L1399,310 L1386,325 L1392,346 L1414,368 L1403,389 L1377,413 L1356,400" fill="none" stroke="#cbb6cf" stroke-width="4.5" opacity="0.45" stroke-linejoin="round"/>
<path d="M1392,250 L1388,282 L1399,310 L1386,325 L1392,346 L1414,368 L1403,389 L1377,413 L1356,400" fill="none" stroke="#a08aad" stroke-width="1.3" opacity="0.85" stroke-linejoin="round"/>
<path d="M1302,432 L1300,464 L1304,486 L1310,500" fill="none" stroke="#cbb6cf" stroke-width="4.5" opacity="0.45" stroke-linejoin="round"/>
<path d="M1302,432 L1300,464 L1304,486 L1310,500" fill="none" stroke="#a08aad" stroke-width="1.3" opacity="0.85" stroke-linejoin="round"/>
<path d="M1231,240 L1242,250" fill="none" stroke="#cbb6cf" stroke-width="4.5" opacity="0.45" stroke-linejoin="round"/>
<path d="M1231,240 L1242,250" fill="none" stroke="#a08aad" stroke-width="1.3" opacity="0.85" stroke-linejoin="round"/>
<path d="M0,443 L28,441 L43,436 L71,439 L84,462 L71,477 L54,500" fill="none" stroke="#cbb6cf" stroke-width="4.5" opacity="0.45" stroke-linejoin="round"/>
<path d="M0,443 L28,441 L43,436 L71,439 L84,462 L71,477 L54,500" fill="none" stroke="#a08aad" stroke-width="1.3" opacity="0.85" stroke-linejoin="round"/>
<path d="M0,0 L149,0 L149,12 L150,24 L157,25 L169,31 L172,37 L154,44 L151,46 L166,52 L168,62 L176,58 L180,51 L186,57 L197,60 L213,67 L223,71 L231,77 L237,81 L249,83 L256,85 L251,92 L253,99 L266,102 L271,107 L275,114 L271,119 L278,133 L284,145 L289,150 L306,163 L313,171 L304,180 L311,193 L315,214 L313,250 L311,282 L304,314 L300,346 L296,353 L276,355 L257,351 L227,349 L193,344 L161,347 L129,342 L101,335 L43,338 L17,326 L0,329 Z" fill="#aad3df"/>
<path d="M424,500 L446,490 L467,477 L489,462 L510,441 L514,421 L510,409 L508,389 L504,370 L514,357 L531,346 L549,340 L564,342 L579,349 L591,351 L611,353 L628,364 L649,368 L671,357 L690,344 L707,334 L720,329 L720,321 L737,312 L752,297 L763,286 L774,284 L795,293 L816,304 L831,314 L836,331 L840,346 L846,374 L853,379 L870,389 L879,409 L902,426 L924,436 L934,454 L956,469 L977,481 L999,492 L1009,500 Z" fill="#aad3df"/>
<path d="M927,218 L924,231 L934,248 L927,259 L924,274 L929,288 L939,299 L949,309 L963,319 L977,328 L989,338 L996,352 L1000,368 L1005,396 L1020,411 L1037,428 L1054,436 L1080,441 L1103,443 L1101,456 L1090,462 L1114,475 L1135,486 L1156,500 L1253,500 L1257,486 L1257,456 L1249,443 L1238,428 L1221,415 L1199,400 L1180,385 L1160,364 L1134,352 L1120,345 L1106,338 L1091,324 L1084,309 L1077,295 L1063,282 L1056,274 L1049,262 L1046,252 L1041,238 L1029,228 L1020,224 L1013,231 L1009,248 L1001,259 L994,248 L987,235 L986,217 L996,207 L987,199 L977,202 L956,205 L939,208 Z" fill="#aad3df"/>
<path d="M242,0 L257,0 L255,8 L248,13 L243,6 Z M283,0 L300,0 L296,4 L287,4 Z M309,199 L317,203 L338,233 L333,238 L313,210 Z" fill="#aad3df"/>
<path d="M795,372 L799,389 L801,404 L800,432 L793,458 L784,473 L774,464 L765,449 L756,432 L759,409 L769,396 L784,389 L791,379 Z" fill="#eceee0"/>
<path d="M767,500 L782,481 L795,479 L806,500 Z" fill="#eceee0"/>
<ellipse cx="834" cy="386" rx="7" ry="3" fill="#eceee0"/>
<ellipse cx="223" cy="92.5" rx="4.5" ry="2.5" transform="rotate(25 223 92.5)" fill="#eceee0"/>
<ellipse cx="1030" cy="260" rx="10" ry="2" transform="rotate(60 1030 260)" fill="#e6ecd6"/>
<ellipse cx="1040" cy="275" rx="12" ry="1.8" transform="rotate(55 1040 275)" fill="#e6ecd6"/>
<ellipse cx="1065" cy="300" rx="14" ry="1.8" transform="rotate(45 1065 300)" fill="#e6ecd6"/>
<ellipse cx="1080" cy="318" rx="16" ry="2" transform="rotate(38 1080 318)" fill="#e6ecd6"/>
<ellipse cx="1095" cy="333" rx="12" ry="2" transform="rotate(30 1095 333)" fill="#e6ecd6"/>
<ellipse cx="1120" cy="356" rx="14" ry="2.5" transform="rotate(25 1120 356)" fill="#e6ecd6"/>
<ellipse cx="1140" cy="370" rx="12" ry="2.2" transform="rotate(20 1140 370)" fill="#e6ecd6"/>
<ellipse cx="1170" cy="392" rx="16" ry="2.5" transform="rotate(22 1170 392)" fill="#e6ecd6"/>
<ellipse cx="1195" cy="402" rx="12" ry="2" transform="rotate(20 1195 402)" fill="#e6ecd6"/>
<path d="M130,0 L119,15 L120,28 L129,54 L171,79 L199,86 L214,107 L242,111 L244,139 L272,159 L287,171 L296,201 L300,250 L298,271 L291,314 L287,338 L257,336 L242,331 L204,328 L167,334 L99,319 L54,324 L17,311 L0,313" fill="none" stroke="#9d8ea9" stroke-width="1.2" opacity="0.8"/>
<path d="M431,500 L489,471 L527,432 L531,409 L519,406 L519,374 L523,368 L549,355 L574,361 L596,370 L639,385 L664,385 L686,370 L707,353 L720,334" fill="none" stroke="#9d8ea9" stroke-width="1.2" opacity="0.8"/>
<path d="M720,336 L763,323 L806,316 L819,325 L806,342 L804,357 L784,361 L752,396 L744,421 L748,454 L763,475 L775,500" fill="none" stroke="#9d8ea9" stroke-width="1.2" opacity="0.8"/>
<path d="M801,361 L810,383 L814,421 L859,428 L902,439 L928,464 L939,500" fill="none" stroke="#9d8ea9" stroke-width="1.2" opacity="0.8"/>
<path d="M953,222 L969,217 L950,248 L939,274 L949,297 L977,317 L996,331 L1005,353 L1010,368 L1016,383 L1031,404 L1052,419 L1080,417 L1120,420 L1140,430 L1160,440 L1180,460 L1200,480 L1215,500" fill="none" stroke="#9d8ea9" stroke-width="1.2" opacity="0.8"/>
<path d="M969,219 L974,245 L991,271 L1020,297 L1043,317 L1070,345 L1091,358 L1130,380 L1165,400 L1200,425 L1230,445 L1257,460" fill="none" stroke="#9d8ea9" stroke-width="1.2" opacity="0.8"/>
<ellipse cx="667" cy="157" rx="14" ry="4" transform="rotate(-12 667 157)" fill="#aad3df"/>
<ellipse cx="795" cy="70" rx="17" ry="5" transform="rotate(30 795 70)" fill="#aad3df"/>
<ellipse cx="686" cy="130" rx="6" ry="2" transform="rotate(-35 686 130)" fill="#aad3df"/>
<ellipse cx="1172" cy="123" rx="20" ry="4.5" transform="rotate(-30 1172 123)" fill="#aad3df"/>
<ellipse cx="1130" cy="58" rx="3" ry="6" transform="rotate(10 1130 58)" fill="#aad3df"/>
<ellipse cx="854" cy="201" rx="3" ry="10" transform="rotate(5 854 201)" fill="#aad3df"/>
<ellipse cx="800" cy="172" rx="2" ry="7" transform="rotate(15 800 172)" fill="#aad3df"/>
<ellipse cx="776" cy="178" rx="2.2" ry="8" transform="rotate(-5 776 178)" fill="#aad3df"/>
<ellipse cx="782" cy="185" rx="8" ry="2" transform="rotate(10 782 185)" fill="#aad3df"/>
<circle cx="162.8" cy="21.4" r="2" fill="#fff" stroke="#666" stroke-width="1"/>
<circle cx="290.8" cy="40.7" r="3" fill="#fff" stroke="#666" stroke-width="1.2"/>
<circle cx="341.8" cy="83.6" r="2" fill="#fff" stroke="#666" stroke-width="1"/>
<circle cx="314.6" cy="171.0" r="2" fill="#fff" stroke="#666" stroke-width="1"/>
<circle cx="340.7" cy="256.4" r="3" fill="#fff" stroke="#666" stroke-width="1.2"/>
<circle cx="193.9" cy="344.3" r="2" fill="#fff" stroke="#666" stroke-width="1"/>
<circle cx="276.8" cy="352.9" r="2" fill="#fff" stroke="#666" stroke-width="1"/>
<circle cx="232.9" cy="356.5" r="2" fill="#fff" stroke="#666" stroke-width="1"/>
<circle cx="22.9" cy="373.2" r="2" fill="#fff" stroke="#666" stroke-width="1"/>
<circle cx="113.6" cy="397.8" r="2" fill="#fff" stroke="#666" stroke-width="1"/>
<circle cx="198.8" cy="413.9" r="2" fill="#fff" stroke="#666" stroke-width="1"/>
<circle cx="161.0" cy="433.8" r="2" fill="#fff" stroke="#666" stroke-width="1"/>
<circle cx="151.7" cy="456.1" r="2" fill="#fff" stroke="#666" stroke-width="1"/>
<circle cx="326.8" cy="456.1" r="3" fill="#fff" stroke="#666" stroke-width="1.2"/>
<circle cx="8.6" cy="413.9" r="2" fill="#fff" stroke="#666" stroke-width="1"/>
<circle cx="432.9" cy="335.0" r="3" fill="#fff" stroke="#666" stroke-width="1.2"/>
<circle cx="543.2" cy="335.3" r="2" fill="#fff" stroke="#666" stroke-width="1"/>
<circle cx="586.0" cy="313.9" r="2" fill="#fff" stroke="#666" stroke-width="1"/>
<circle cx="610.7" cy="355.0" r="3" fill="#fff" stroke="#666" stroke-width="1.2"/>
<circle cx="705.0" cy="328.2" r="3.2" fill="#fff" stroke="#555" stroke-width="1.2"/><circle cx="705.0" cy="328.2" r="1.3" fill="#444"/>
<circle cx="498.9" cy="391.4" r="2" fill="#fff" stroke="#666" stroke-width="1"/>
<circle cx="495.0" cy="436.0" r="2" fill="#fff" stroke="#666" stroke-width="1"/>
<circle cx="477.8" cy="463.2" r="2" fill="#fff" stroke="#666" stroke-width="1"/>
<circle cx="466.0" cy="472.8" r="3" fill="#fff" stroke="#666" stroke-width="1.2"/>
<circle cx="396.0" cy="458.9" r="2" fill="#fff" stroke="#666" stroke-width="1"/>
<circle cx="416.8" cy="485.7" r="2" fill="#fff" stroke="#666" stroke-width="1"/>
<circle cx="551.8" cy="27.9" r="2" fill="#fff" stroke="#666" stroke-width="1"/>
<circle cx="376.0" cy="47.0" r="2" fill="#fff" stroke="#666" stroke-width="1"/>
<circle cx="382.0" cy="144.0" r="2" fill="#fff" stroke="#666" stroke-width="1"/>
<circle cx="425.0" cy="192.8" r="2" fill="#fff" stroke="#666" stroke-width="1"/>
<circle cx="506.8" cy="196.0" r="2" fill="#fff" stroke="#666" stroke-width="1"/>
<circle cx="588.8" cy="196.7" r="2" fill="#fff" stroke="#666" stroke-width="1"/>
<circle cx="646.0" cy="188.0" r="2" fill="#fff" stroke="#666" stroke-width="1"/>
<circle cx="646.7" cy="168.8" r="2" fill="#fff" stroke="#666" stroke-width="1"/>
<circle cx="668.6" cy="146.8" r="2" fill="#fff" stroke="#666" stroke-width="1"/>
<circle cx="640.7" cy="99.6" r="2" fill="#fff" stroke="#666" stroke-width="1"/>
<circle cx="627.8" cy="234.6" r="2" fill="#fff" stroke="#666" stroke-width="1"/>
<circle cx="711.4" cy="78.2" r="2" fill="#fff" stroke="#666" stroke-width="1"/>
<circle cx="723.8" cy="48.8" r="2" fill="#fff" stroke="#666" stroke-width="1"/>
<circle cx="755.7" cy="90.5" r="3" fill="#fff" stroke="#666" stroke-width="1.2"/>
<circle cx="862.9" cy="23.1" r="2" fill="#fff" stroke="#666" stroke-width="1"/>
<circle cx="821.9" cy="21.0" r="2" fill="#fff" stroke="#666" stroke-width="1"/>
<circle cx="894.0" cy="38.6" r="3" fill="#fff" stroke="#666" stroke-width="1.2"/>
<circle cx="961.2" cy="61.9" r="2" fill="#fff" stroke="#666" stroke-width="1"/>
<circle cx="768.8" cy="194.0" r="2" fill="#fff" stroke="#666" stroke-width="1"/>
<circle cx="758.8" cy="217.9" r="2" fill="#fff" stroke="#666" stroke-width="1"/>
<circle cx="866.7" cy="217.9" r="2" fill="#fff" stroke="#666" stroke-width="1"/>
<circle cx="927.9" cy="217.9" r="3" fill="#fff" stroke="#666" stroke-width="1.2"/>
<circle cx="994.0" cy="204.3" r="3" fill="#fff" stroke="#666" stroke-width="1.2"/>
<circle cx="968.8" cy="177.4" r="2" fill="#fff" stroke="#666" stroke-width="1"/>
<circle cx="807.6" cy="242.9" r="2" fill="#fff" stroke="#666" stroke-width="1"/>
<circle cx="1024.3" cy="225.0" r="2" fill="#fff" stroke="#666" stroke-width="1"/>
<circle cx="1111.4" cy="33.6" r="3.2" fill="#fff" stroke="#555" stroke-width="1.2"/><circle cx="1111.4" cy="33.6" r="1.3" fill="#444"/>
<circle cx="1145.7" cy="38.1" r="3.2" fill="#fff" stroke="#555" stroke-width="1.2"/><circle cx="1145.7" cy="38.1" r="1.3" fill="#444"/>
<circle cx="1169.7" cy="69.0" r="2" fill="#fff" stroke="#666" stroke-width="1"/>
<circle cx="1234.0" cy="81.9" r="3.2" fill="#fff" stroke="#555" stroke-width="1.2"/><circle cx="1234.0" cy="81.9" r="1.3" fill="#444"/>
<circle cx="1312.8" cy="40.7" r="2" fill="#fff" stroke="#666" stroke-width="1"/>
<circle cx="1350.8" cy="79.9" r="2" fill="#fff" stroke="#666" stroke-width="1"/>
<circle cx="1122.8" cy="100.0" r="2" fill="#fff" stroke="#666" stroke-width="1"/>
<circle cx="1262.5" cy="121.7" r="2" fill="#fff" stroke="#666" stroke-width="1"/>
<circle cx="1283.9" cy="165.0" r="2" fill="#fff" stroke="#666" stroke-width="1"/>
<circle cx="1196.7" cy="176.8" r="2" fill="#fff" stroke="#666" stroke-width="1"/>
<circle cx="1261.4" cy="174.6" r="2" fill="#fff" stroke="#666" stroke-width="1"/>
<circle cx="1336.8" cy="169.9" r="2" fill="#fff" stroke="#666" stroke-width="1"/>
<circle cx="1332.8" cy="198.2" r="3" fill="#fff" stroke="#666" stroke-width="1.2"/>
<circle cx="1217.9" cy="211.0" r="2" fill="#fff" stroke="#666" stroke-width="1"/>
<circle cx="1093.6" cy="194.1" r="3.2" fill="#fff" stroke="#555" stroke-width="1.2"/><circle cx="1093.6" cy="194.1" r="1.3" fill="#444"/>
<circle cx="1078.9" cy="145.0" r="2" fill="#fff" stroke="#666" stroke-width="1"/>
<circle cx="1364.7" cy="111.9" r="2" fill="#fff" stroke="#666" stroke-width="1"/>
<circle cx="1407.5" cy="62.8" r="2" fill="#fff" stroke="#666" stroke-width="1"/>
<circle cx="758.6" cy="251.7" r="2" fill="#fff" stroke="#666" stroke-width="1"/>
<circle cx="836.8" cy="259.0" r="2" fill="#fff" stroke="#666" stroke-width="1"/>
<circle cx="882.8" cy="278.9" r="3" fill="#fff" stroke="#666" stroke-width="1.2"/>
<circle cx="774.0" cy="284.7" r="3" fill="#fff" stroke="#666" stroke-width="1.2"/>
<circle cx="813.9" cy="304.0" r="2" fill="#fff" stroke="#666" stroke-width="1"/>
<circle cx="878.6" cy="325.0" r="3" fill="#fff" stroke="#666" stroke-width="1.2"/>
<circle cx="932.8" cy="314.7" r="3.2" fill="#fff" stroke="#555" stroke-width="1.2"/><circle cx="932.8" cy="314.7" r="1.3" fill="#444"/>
<circle cx="981.8" cy="335.0" r="2" fill="#fff" stroke="#666" stroke-width="1"/>
<circle cx="931.0" cy="365.9" r="2" fill="#fff" stroke="#666" stroke-width="1"/>
<circle cx="872.8" cy="387.8" r="2" fill="#fff" stroke="#666" stroke-width="1"/>
<circle cx="941.8" cy="400.0" r="2" fill="#fff" stroke="#666" stroke-width="1"/>
<circle cx="934.3" cy="441.8" r="3.2" fill="#fff" stroke="#555" stroke-width="1.2"/><circle cx="934.3" cy="441.8" r="1.3" fill="#444"/>
<circle cx="953.6" cy="468.1" r="2" fill="#fff" stroke="#666" stroke-width="1"/>
<circle cx="764.6" cy="439.6" r="2" fill="#fff" stroke="#666" stroke-width="1"/>
<circle cx="1073.5" cy="468.1" r="2" fill="#fff" stroke="#666" stroke-width="1"/>
<circle cx="1148.9" cy="260.7" r="2" fill="#fff" stroke="#666" stroke-width="1"/>
<circle cx="1216.8" cy="275.7" r="2" fill="#fff" stroke="#666" stroke-width="1"/>
<circle cx="1297.8" cy="257.9" r="3.2" fill="#fff" stroke="#555" stroke-width="1.2"/><circle cx="1297.8" cy="257.9" r="1.3" fill="#444"/>
<circle cx="1176.8" cy="351.8" r="2" fill="#fff" stroke="#666" stroke-width="1"/>
<circle cx="1300.0" cy="364.6" r="2" fill="#fff" stroke="#666" stroke-width="1"/>
<circle cx="1363.8" cy="352.9" r="2" fill="#fff" stroke="#666" stroke-width="1"/>
<circle cx="1321.0" cy="434.3" r="2" fill="#fff" stroke="#666" stroke-width="1"/>
<circle cx="1414.6" cy="397.8" r="2" fill="#fff" stroke="#666" stroke-width="1"/>
<circle cx="1133.9" cy="487.8" r="3" fill="#fff" stroke="#666" stroke-width="1.2"/>
<circle cx="1407.5" cy="310.6" r="2" fill="#fff" stroke="#666" stroke-width="1"/>
<circle cx="1397.5" cy="270.8" r="2" fill="#fff" stroke="#666" stroke-width="1"/>
<text x="150" y="32.0" font-size="11" fill="#333" stroke="#fff" stroke-width="2.2" stroke-opacity="0.75" paint-order="stroke" font-family="Liberation Sans">Brest</text>
<text x="368" y="59.0" font-size="11" fill="#333" stroke="#fff" stroke-width="2.2" stroke-opacity="0.75" paint-order="stroke" font-family="Liberation Sans">Le Mans</text>
<text x="537" y="24.0" font-size="11" fill="#333" stroke="#fff" stroke-width="2.2" stroke-opacity="0.75" paint-order="stroke" font-family="Liberation Sans">Troyes</text>
<text x="840" y="19.0" font-size="11" fill="#333" stroke="#fff" stroke-width="2.2" stroke-opacity="0.75" paint-order="stroke" font-family="Liberation Sans">Augsburg</text>
<text x="810" y="32.0" font-size="11" fill="#333" stroke="#fff" stroke-width="2.2" stroke-opacity="0.75" paint-order="stroke" font-family="Liberation Sans">Ulm</text>
<text x="1000" y="7.0" font-size="11" fill="#333" stroke="#fff" stroke-width="2.2" stroke-opacity="0.75" paint-order="stroke" font-family="Liberation Sans">Budějovice</text>
<text x="1097" y="27.0" font-size="11" fill="#333" stroke="#fff" stroke-width="2.2" stroke-opacity="0.75" paint-order="stroke" font-family="Liberation Sans">Wien</text>
<text x="1150" y="41.0" font-size="11" fill="#333" stroke="#fff" stroke-width="2.2" stroke-opacity="0.75" paint-order="stroke" font-family="Liberation Sans">Bratislava</text>
<text x="1319" y="11.0" font-size="11" fill="#333" stroke="#fff" stroke-width="2.2" stroke-opacity="0.75" paint-order="stroke" font-family="Liberation Sans">Košice</text>
<text x="1267" y="37.0" font-size="11" fill="#333" stroke="#fff" stroke-width="2.2" stroke-opacity="0.75" paint-order="stroke" font-family="Liberation Sans">Miskolc</text>
<text x="1385" y="59.0" font-size="11" fill="#333" stroke="#fff" stroke-width="2.2" stroke-opacity="0.75" paint-order="stroke" font-family="Liberation Sans">Satu Ma</text>
<text x="345" y="88.0" font-size="11" fill="#333" stroke="#fff" stroke-width="2.2" stroke-opacity="0.75" paint-order="stroke" font-family="Liberation Sans">Angers</text>
<text x="645" y="103.0" font-size="11" fill="#333" stroke="#fff" stroke-width="2.2" stroke-opacity="0.75" paint-order="stroke" font-family="Liberation Sans">Besançon</text>
<text x="700" y="74.0" font-size="11" fill="#333" stroke="#fff" stroke-width="2.2" stroke-opacity="0.75" paint-order="stroke" font-family="Liberation Sans">Basel</text>
<text x="940" y="74.0" font-size="11" fill="#333" stroke="#fff" stroke-width="2.2" stroke-opacity="0.75" paint-order="stroke" font-family="Liberation Sans">Salzburg</text>
<text x="1160" y="66.0" font-size="11" fill="#333" stroke="#fff" stroke-width="2.2" stroke-opacity="0.75" paint-order="stroke" font-family="Liberation Sans">Győr</text>
<text x="1355" y="76.0" font-size="11" fill="#333" stroke="#fff" stroke-width="2.2" stroke-opacity="0.75" paint-order="stroke" font-family="Liberation Sans">Debrecen</text>
<text x="1095" y="97.0" font-size="11" fill="#333" stroke="#fff" stroke-width="2.2" stroke-opacity="0.75" paint-order="stroke" font-family="Liberation Sans">Szombathely</text>
<text x="364" y="140.0" font-size="11" fill="#333" stroke="#fff" stroke-width="2.2" stroke-opacity="0.75" paint-order="stroke" font-family="Liberation Sans">Poitiers</text>
<text x="645" y="143.0" font-size="11" fill="#333" stroke="#fff" stroke-width="2.2" stroke-opacity="0.75" paint-order="stroke" font-family="Liberation Sans">Lausanne</text>
<text x="630" y="165.0" font-size="11" fill="#333" stroke="#fff" stroke-width="2.2" stroke-opacity="0.75" paint-order="stroke" font-family="Liberation Sans">Genève</text>
<text x="1058" y="141.0" font-size="11" fill="#333" stroke="#fff" stroke-width="2.2" stroke-opacity="0.75" paint-order="stroke" font-family="Liberation Sans">Maribor</text>
<text x="1238" y="133.0" font-size="11" fill="#333" stroke="#fff" stroke-width="2.2" stroke-opacity="0.75" paint-order="stroke" font-family="Liberation Sans">Kecskemét</text>
<text x="1350" y="124.0" font-size="11" fill="#333" stroke="#fff" stroke-width="2.2" stroke-opacity="0.75" paint-order="stroke" font-family="Liberation Sans">Oradea</text>
<text x="1187" y="173.0" font-size="11" fill="#333" stroke="#fff" stroke-width="2.2" stroke-opacity="0.75" paint-order="stroke" font-family="Liberation Sans">Pécs</text>
<text x="1269" y="162.0" font-size="11" fill="#333" stroke="#fff" stroke-width="2.2" stroke-opacity="0.75" paint-order="stroke" font-family="Liberation Sans">Szeged</text>
<text x="1325" y="167.0" font-size="11" fill="#333" stroke="#fff" stroke-width="2.2" stroke-opacity="0.75" paint-order="stroke" font-family="Liberation Sans">Arad</text>
<text x="1405" y="147.0" font-size="11" fill="#333" stroke="#fff" stroke-width="2.2" stroke-opacity="0.75" paint-order="stroke" font-family="Liberation Sans">Clu</text>
<text x="288" y="183.0" font-size="11" fill="#333" stroke="#fff" stroke-width="2.2" stroke-opacity="0.75" paint-order="stroke" font-family="Liberation Sans">La Rochelle</text>
<text x="483" y="180.0" font-size="11" fill="#333" stroke="#fff" stroke-width="2.2" stroke-opacity="0.75" paint-order="stroke" font-family="Liberation Sans">Clermont-</text>
<text x="490" y="192.0" font-size="11" fill="#333" stroke="#fff" stroke-width="2.2" stroke-opacity="0.75" paint-order="stroke" font-family="Liberation Sans">Ferrand</text>
<text x="406" y="189.0" font-size="11" fill="#333" stroke="#fff" stroke-width="2.2" stroke-opacity="0.75" paint-order="stroke" font-family="Liberation Sans">Limoges</text>
<text x="558" y="193.0" font-size="11" fill="#333" stroke="#fff" stroke-width="2.2" stroke-opacity="0.75" paint-order="stroke" font-family="Liberation Sans">Villeurbanne</text>
<text x="628" y="201.0" font-size="11" fill="#333" stroke="#fff" stroke-width="2.2" stroke-opacity="0.75" paint-order="stroke" font-family="Liberation Sans">Annecy</text>
<text x="752" y="190.0" font-size="11" fill="#333" stroke="#fff" stroke-width="2.2" stroke-opacity="0.75" paint-order="stroke" font-family="Liberation Sans">Varese</text>
<text x="956" y="189.0" font-size="11" fill="#333" stroke="#fff" stroke-width="2.2" stroke-opacity="0.75" paint-order="stroke" font-family="Liberation Sans">Udine</text>
<text x="1240" y="187.0" font-size="11" fill="#333" stroke="#fff" stroke-width="2.2" stroke-opacity="0.75" paint-order="stroke" font-family="Liberation Sans">Суботица</text>
<text x="1405" y="189.0" font-size="11" fill="#333" stroke="#fff" stroke-width="2.2" stroke-opacity="0.75" paint-order="stroke" font-family="Liberation Sans">Deva</text>
<text x="743" y="214.0" font-size="11" fill="#333" stroke="#fff" stroke-width="2.2" stroke-opacity="0.75" paint-order="stroke" font-family="Liberation Sans">Novara</text>
<text x="1202" y="225.0" font-size="11" fill="#333" stroke="#fff" stroke-width="2.2" stroke-opacity="0.75" paint-order="stroke" font-family="Liberation Sans">Osijek</text>
<text x="1343" y="225.0" font-size="11" fill="#333" stroke="#fff" stroke-width="2.2" stroke-opacity="0.75" paint-order="stroke" font-family="Liberation Sans">Reșița</text>
<text x="608" y="246.0" font-size="11" fill="#333" stroke="#fff" stroke-width="2.2" stroke-opacity="0.75" paint-order="stroke" font-family="Liberation Sans">Grenoble</text>
<text x="788" y="240.0" font-size="11" fill="#333" stroke="#fff" stroke-width="2.2" stroke-opacity="0.75" paint-order="stroke" font-family="Liberation Sans">Piacenza</text>
<text x="850" y="230.0" font-size="11" fill="#333" stroke="#fff" stroke-width="2.2" stroke-opacity="0.75" paint-order="stroke" font-family="Liberation Sans">Verona</text>
<text x="1010" y="240.0" font-size="11" fill="#333" stroke="#fff" stroke-width="2.2" stroke-opacity="0.75" paint-order="stroke" font-family="Liberation Sans">Rijeka</text>
<text x="1375" y="242.0" font-size="11" fill="#333" stroke="#fff" stroke-width="2.2" stroke-opacity="0.75" paint-order="stroke" font-family="Liberation Sans">Drobeta-</text>
<text x="1388" y="255.0" font-size="11" fill="#333" stroke="#fff" stroke-width="2.2" stroke-opacity="0.75" paint-order="stroke" font-family="Liberation Sans">Turnu</text>
<text x="1378" y="267.0" font-size="11" fill="#333" stroke="#fff" stroke-width="2.2" stroke-opacity="0.75" paint-order="stroke" font-family="Liberation Sans">Severin</text>
<text x="732" y="265.0" font-size="11" fill="#333" stroke="#fff" stroke-width="2.2" stroke-opacity="0.75" paint-order="stroke" font-family="Liberation Sans">Alessandria</text>
<text x="822" y="271.0" font-size="11" fill="#333" stroke="#fff" stroke-width="2.2" stroke-opacity="0.75" paint-order="stroke" font-family="Liberation Sans">Parma</text>
<text x="1125" y="276.0" font-size="11" fill="#333" stroke="#fff" stroke-width="2.2" stroke-opacity="0.75" paint-order="stroke" font-family="Liberation Sans">Banja Luka</text>
<text x="1178" y="273.0" font-size="11" fill="#333" stroke="#fff" stroke-width="2.2" stroke-opacity="0.75" paint-order="stroke" font-family="Liberation Sans">Tuzla</text>
<text x="566" y="311.0" font-size="11" fill="#333" stroke="#fff" stroke-width="2.2" stroke-opacity="0.75" paint-order="stroke" font-family="Liberation Sans">Avignon</text>
<text x="818" y="308.0" font-size="11" fill="#333" stroke="#fff" stroke-width="2.2" stroke-opacity="0.75" paint-order="stroke" font-family="Liberation Sans">La Spezia</text>
<text x="1390" y="324.0" font-size="11" fill="#333" stroke="#fff" stroke-width="2.2" stroke-opacity="0.75" paint-order="stroke" font-family="Liberation Sans">Видин</text>
<text x="168" y="342.0" font-size="11" fill="#333" stroke="#fff" stroke-width="2.2" stroke-opacity="0.75" paint-order="stroke" font-family="Liberation Sans">Santander</text>
<text x="250" y="337.0" font-size="11" fill="#333" stroke="#fff" stroke-width="2.2" stroke-opacity="0.75" paint-order="stroke" font-family="Liberation Sans">Donostia/</text>
<text x="244" y="350.0" font-size="11" fill="#333" stroke="#fff" stroke-width="2.2" stroke-opacity="0.75" paint-order="stroke" font-family="Liberation Sans">San Sebastián</text>
<text x="517" y="332.0" font-size="11" fill="#333" stroke="#fff" stroke-width="2.2" stroke-opacity="0.75" paint-order="stroke" font-family="Liberation Sans">Montpellier</text>
<text x="966" y="331.0" font-size="11" fill="#333" stroke="#fff" stroke-width="2.2" stroke-opacity="0.75" paint-order="stroke" font-family="Liberation Sans">Ancona</text>
<text x="12" y="369.0" font-size="11" fill="#333" stroke="#fff" stroke-width="2.2" stroke-opacity="0.75" paint-order="stroke" font-family="Liberation Sans">Lugo</text>
<text x="218" y="369.0" font-size="11" fill="#333" stroke="#fff" stroke-width="2.2" stroke-opacity="0.75" paint-order="stroke" font-family="Liberation Sans">Bilbao</text>
<text x="917" y="362.0" font-size="11" fill="#333" stroke="#fff" stroke-width="2.2" stroke-opacity="0.75" paint-order="stroke" font-family="Liberation Sans">Perugia</text>
<text x="1161" y="363.0" font-size="11" fill="#333" stroke="#fff" stroke-width="2.2" stroke-opacity="0.75" paint-order="stroke" font-family="Liberation Sans">Mostar</text>
<text x="1275" y="362.0" font-size="11" fill="#333" stroke="#fff" stroke-width="2.2" stroke-opacity="0.75" paint-order="stroke" font-family="Liberation Sans">Нови Пазар</text>
<text x="1353" y="365.0" font-size="11" fill="#333" stroke="#fff" stroke-width="2.2" stroke-opacity="0.75" paint-order="stroke" font-family="Liberation Sans">Ниш</text>
<text x="852" y="384.0" font-size="11" fill="#333" stroke="#fff" stroke-width="2.2" stroke-opacity="0.75" paint-order="stroke" font-family="Liberation Sans">Grosseto</text>
<text x="103" y="410.0" font-size="11" fill="#333" stroke="#fff" stroke-width="2.2" stroke-opacity="0.75" paint-order="stroke" font-family="Liberation Sans">León</text>
<text x="182" y="410.0" font-size="11" fill="#333" stroke="#fff" stroke-width="2.2" stroke-opacity="0.75" paint-order="stroke" font-family="Liberation Sans">Burgos</text>
<text x="473" y="404.0" font-size="11" fill="#333" stroke="#fff" stroke-width="2.2" stroke-opacity="0.75" paint-order="stroke" font-family="Liberation Sans">Perpignan</text>
<text x="1335" y="402.0" font-size="11" fill="#333" stroke="#fff" stroke-width="2.2" stroke-opacity="0.75" paint-order="stroke" font-family="Liberation Sans">Перник</text>
<text x="0" y="425.0" font-size="11" fill="#333" stroke="#fff" stroke-width="2.2" stroke-opacity="0.75" paint-order="stroke" font-family="Liberation Sans">urense</text>
<text x="143" y="431.0" font-size="11" fill="#333" stroke="#fff" stroke-width="2.2" stroke-opacity="0.75" paint-order="stroke" font-family="Liberation Sans">Palencia</text>
<text x="1317" y="431.0" font-size="11" fill="#333" stroke="#fff" stroke-width="2.2" stroke-opacity="0.75" paint-order="stroke" font-family="Liberation Sans">Тетово</text>
<text x="1387" y="431.0" font-size="11" fill="#333" stroke="#fff" stroke-width="2.2" stroke-opacity="0.75" paint-order="stroke" font-family="Liberation Sans">Благоев</text>
<text x="747" y="453.0" font-size="11" fill="#333" stroke="#fff" stroke-width="2.2" stroke-opacity="0.75" paint-order="stroke" font-family="Liberation Sans">Ajaccio</text>
<text x="930" y="411.0" font-size="11" fill="#333" stroke="#fff" stroke-width="2.2" stroke-opacity="0.75" paint-order="stroke" font-family="Liberation Sans">Terni</text>
<text x="480" y="447.0" font-size="11" fill="#333" stroke="#fff" stroke-width="2.2" stroke-opacity="0.75" paint-order="stroke" font-family="Liberation Sans">Girona</text>
<text x="382" y="454.0" font-size="11" fill="#333" stroke="#fff" stroke-width="2.2" stroke-opacity="0.75" paint-order="stroke" font-family="Liberation Sans">Lleida</text>
<text x="103" y="460.0" font-size="11" fill="#333" stroke="#fff" stroke-width="2.2" stroke-opacity="0.75" paint-order="stroke" font-family="Liberation Sans">Valladolid</text>
<text x="488" y="466.0" font-size="11" fill="#333" stroke="#fff" stroke-width="2.2" stroke-opacity="0.75" paint-order="stroke" font-family="Liberation Sans">Mataró</text>
<text x="940" y="478.0" font-size="11" fill="#333" stroke="#fff" stroke-width="2.2" stroke-opacity="0.75" paint-order="stroke" font-family="Liberation Sans">Latina</text>
<text x="990" y="484.0" font-size="11" fill="#333" stroke="#fff" stroke-width="2.2" stroke-opacity="0.75" paint-order="stroke" font-family="Liberation Sans">Giugliano</text>
<text x="982" y="495.0" font-size="11" fill="#333" stroke="#fff" stroke-width="2.2" stroke-opacity="0.75" paint-order="stroke" font-family="Liberation Sans">in Campania</text>
<text x="1057" y="479.0" font-size="11" fill="#333" stroke="#fff" stroke-width="2.2" stroke-opacity="0.75" paint-order="stroke" font-family="Liberation Sans">Foggia</text>
<text x="405" y="496.0" font-size="11" fill="#333" stroke="#fff" stroke-width="2.2" stroke-opacity="0.75" paint-order="stroke" font-family="Liberation Sans">Reus</text>
<text x="740" y="496.0" font-size="11" fill="#333" stroke="#fff" stroke-width="2.2" stroke-opacity="0.75" paint-order="stroke" font-family="Liberation Sans">Tàttari/</text>
<text x="1243" y="492.0" font-size="11" fill="#333" stroke="#fff" stroke-width="2.2" stroke-opacity="0.75" paint-order="stroke" font-family="Liberation Sans">Sl</text>
<text x="1408" y="101.0" font-size="11" fill="#333" stroke="#fff" stroke-width="2.2" stroke-opacity="0.75" paint-order="stroke" font-family="Liberation Sans">Zală</text>
<text x="296" y="44.7" font-size="13" fill="#333" stroke="#fff" stroke-width="2.2" stroke-opacity="0.75" paint-order="stroke" font-family="Liberation Sans">Rennes</text>
<text x="867" y="52.7" font-size="13" fill="#333" stroke="#fff" stroke-width="2.2" stroke-opacity="0.75" paint-order="stroke" font-family="Liberation Sans">München</text>
<text x="737" y="85.7" font-size="13" fill="#333" stroke="#fff" stroke-width="2.2" stroke-opacity="0.75" paint-order="stroke" font-family="Liberation Sans">Zürich</text>
<text x="1237" y="76.7" font-size="13" fill="#333" stroke="#fff" stroke-width="2.2" stroke-opacity="0.75" paint-order="stroke" font-family="Liberation Sans">Budapest</text>
<text x="281" y="261.7" font-size="13" fill="#333" stroke="#fff" stroke-width="2.2" stroke-opacity="0.75" paint-order="stroke" font-family="Liberation Sans">Bordeaux</text>
<text x="859" y="275.7" font-size="13" fill="#333" stroke="#fff" stroke-width="2.2" stroke-opacity="0.75" paint-order="stroke" font-family="Liberation Sans">Bologna</text>
<text x="906" y="232.7" font-size="13" fill="#333" stroke="#fff" stroke-width="2.2" stroke-opacity="0.75" paint-order="stroke" font-family="Liberation Sans">Venezia</text>
<text x="975" y="218.7" font-size="13" fill="#333" stroke="#fff" stroke-width="2.2" stroke-opacity="0.75" paint-order="stroke" font-family="Liberation Sans">Trieste</text>
<text x="1074" y="188.7" font-size="13" fill="#333" stroke="#fff" stroke-width="2.2" stroke-opacity="0.75" paint-order="stroke" font-family="Liberation Sans">Zagreb</text>
<text x="1248" y="275.7" font-size="13" fill="#333" stroke="#fff" stroke-width="2.2" stroke-opacity="0.75" paint-order="stroke" font-family="Liberation Sans">Београд</text>
<text x="753" y="299.7" font-size="13" fill="#333" stroke="#fff" stroke-width="2.2" stroke-opacity="0.75" paint-order="stroke" font-family="Liberation Sans">Genova</text>
<text x="833" y="329.7" font-size="13" fill="#333" stroke="#fff" stroke-width="2.2" stroke-opacity="0.75" paint-order="stroke" font-family="Liberation Sans">Firenze</text>
<text x="377" y="340.7" font-size="13" fill="#333" stroke="#fff" stroke-width="2.2" stroke-opacity="0.75" paint-order="stroke" font-family="Liberation Sans">Toulouse</text>
<text x="586" y="368.7" font-size="13" fill="#333" stroke="#fff" stroke-width="2.2" stroke-opacity="0.75" paint-order="stroke" font-family="Liberation Sans">Marseille</text>
<text x="680" y="322.7" font-size="13" fill="#333" stroke="#fff" stroke-width="2.2" stroke-opacity="0.75" paint-order="stroke" font-family="Liberation Sans">Monaco</text>
<text x="902" y="293.7" font-size="13" fill="#333" stroke="#fff" stroke-width="2.2" stroke-opacity="0.75" paint-order="stroke" font-family="Liberation Sans">Città di San</text>
<text x="914" y="309.7" font-size="13" fill="#333" stroke="#fff" stroke-width="2.2" stroke-opacity="0.75" paint-order="stroke" font-family="Liberation Sans">Marino</text>
<text x="300" y="451.7" font-size="13" fill="#333" stroke="#fff" stroke-width="2.2" stroke-opacity="0.75" paint-order="stroke" font-family="Liberation Sans">Zaragoza</text>
<text x="918" y="455.7" font-size="13" fill="#333" stroke="#fff" stroke-width="2.2" stroke-opacity="0.75" paint-order="stroke" font-family="Liberation Sans">Roma</text>
<text x="440" y="485.7" font-size="13" fill="#333" stroke="#fff" stroke-width="2.2" stroke-opacity="0.75" paint-order="stroke" font-family="Liberation Sans">Barcelona</text>
<text x="1122" y="481.7" font-size="13" fill="#333" stroke="#fff" stroke-width="2.2" stroke-opacity="0.75" paint-order="stroke" font-family="Liberation Sans">Bari</text>
<text x="1305" y="193.7" font-size="13" fill="#333" stroke="#fff" stroke-width="2.2" stroke-opacity="0.75" paint-order="stroke" font-family="Liberation Sans">Timișoara</text>
<text x="704" y="32.0" font-size="11" fill="#333" stroke="#fff" stroke-width="2.2" stroke-opacity="0.75" paint-order="stroke" font-family="Liberation Sans">Freiburg</text>
<text x="700" y="45.0" font-size="11" fill="#333" stroke="#fff" stroke-width="2.2" stroke-opacity="0.75" paint-order="stroke" font-family="Liberation Sans">im Breisgau</text>
<text x="225" y="40.0" font-size="11" fill="#7c6490" font-style="italic" stroke="#fff" stroke-width="2.2" stroke-opacity="0.75" paint-order="stroke" font-family="Liberation Sans">Bretagne</text>
<text x="735" y="6.0" font-size="11" fill="#7c6490" font-style="italic" stroke="#fff" stroke-width="2.2" stroke-opacity="0.75" paint-order="stroke" font-family="Liberation Sans">Baden-Württemberg</text>
<text x="299" y="87.0" font-size="11" fill="#7c6490" font-style="italic" stroke="#fff" stroke-width="2.2" stroke-opacity="0.75" paint-order="stroke" font-family="Liberation Sans">Pays de</text>
<text x="300" y="99.0" font-size="11" fill="#7c6490" font-style="italic" stroke="#fff" stroke-width="2.2" stroke-opacity="0.75" paint-order="stroke" font-family="Liberation Sans">la Loire</text>
<text x="424" y="71.0" font-size="11" fill="#7c6490" font-style="italic" stroke="#fff" stroke-width="2.2" stroke-opacity="0.75" paint-order="stroke" font-family="Liberation Sans">Centre-Val</text>
<text x="430" y="82.0" font-size="11" fill="#7c6490" font-style="italic" stroke="#fff" stroke-width="2.2" stroke-opacity="0.75" paint-order="stroke" font-family="Liberation Sans">de Loire</text>
<text x="566" y="88.0" font-size="11" fill="#7c6490" font-style="italic" stroke="#fff" stroke-width="2.2" stroke-opacity="0.75" paint-order="stroke" font-family="Liberation Sans">Bourgogne-</text>
<text x="575" y="100.0" font-size="11" fill="#7c6490" font-style="italic" stroke="#fff" stroke-width="2.2" stroke-opacity="0.75" paint-order="stroke" font-family="Liberation Sans">Franche-</text>
<text x="578" y="112.0" font-size="11" fill="#7c6490" font-style="italic" stroke="#fff" stroke-width="2.2" stroke-opacity="0.75" paint-order="stroke" font-family="Liberation Sans">Comté</text>
<text x="955" y="44.0" font-size="11" fill="#7c6490" font-style="italic" stroke="#fff" stroke-width="2.2" stroke-opacity="0.75" paint-order="stroke" font-family="Liberation Sans">Oberösterreich</text>
<text x="865" y="102.0" font-size="11" fill="#7c6490" font-style="italic" stroke="#fff" stroke-width="2.2" stroke-opacity="0.75" paint-order="stroke" font-family="Liberation Sans">Tirol</text>
<text x="1025" y="105.0" font-size="11" fill="#7c6490" font-style="italic" stroke="#fff" stroke-width="2.2" stroke-opacity="0.75" paint-order="stroke" font-family="Liberation Sans">Steiermark</text>
<text x="1300" y="98.0" font-size="11" fill="#7c6490" font-style="italic" stroke="#fff" stroke-width="2.2" stroke-opacity="0.75" paint-order="stroke" font-family="Liberation Sans">Alföld és</text>
<text x="1305" y="110.0" font-size="11" fill="#7c6490" font-style="italic" stroke="#fff" stroke-width="2.2" stroke-opacity="0.75" paint-order="stroke" font-family="Liberation Sans">Észak</text>
<text x="853" y="149.0" font-size="11" fill="#7c6490" font-style="italic" stroke="#fff" stroke-width="2.2" stroke-opacity="0.75" paint-order="stroke" font-family="Liberation Sans">Trentino-</text>
<text x="848" y="160.0" font-size="11" fill="#7c6490" font-style="italic" stroke="#fff" stroke-width="2.2" stroke-opacity="0.75" paint-order="stroke" font-family="Liberation Sans">Alto Adige/</text>
<text x="860" y="172.0" font-size="11" fill="#7c6490" font-style="italic" stroke="#fff" stroke-width="2.2" stroke-opacity="0.75" paint-order="stroke" font-family="Liberation Sans">Südtirol</text>
<text x="562" y="214.0" font-size="11" fill="#7c6490" font-style="italic" stroke="#fff" stroke-width="2.2" stroke-opacity="0.75" paint-order="stroke" font-family="Liberation Sans">Auvergne-</text>
<text x="558" y="227.0" font-size="11" fill="#7c6490" font-style="italic" stroke="#fff" stroke-width="2.2" stroke-opacity="0.75" paint-order="stroke" font-family="Liberation Sans">Rhône-Alpes</text>
<text x="784" y="208.0" font-size="11" fill="#7c6490" font-style="italic" stroke="#fff" stroke-width="2.2" stroke-opacity="0.75" paint-order="stroke" font-family="Liberation Sans">Lombardia</text>
<text x="902" y="202.0" font-size="11" fill="#7c6490" font-style="italic" stroke="#fff" stroke-width="2.2" stroke-opacity="0.75" paint-order="stroke" font-family="Liberation Sans">Veneto</text>
<text x="1250" y="226.0" font-size="11" fill="#7c6490" font-style="italic" stroke="#fff" stroke-width="2.2" stroke-opacity="0.75" paint-order="stroke" font-family="Liberation Sans">Војводина</text>
<text x="702" y="233.0" font-size="11" fill="#7c6490" font-style="italic" stroke="#fff" stroke-width="2.2" stroke-opacity="0.75" paint-order="stroke" font-family="Liberation Sans">Piemonte</text>
<text x="366" y="244.0" font-size="11" fill="#7c6490" font-style="italic" stroke="#fff" stroke-width="2.2" stroke-opacity="0.75" paint-order="stroke" font-family="Liberation Sans">Nouvelle-</text>
<text x="366" y="256.0" font-size="11" fill="#7c6490" font-style="italic" stroke="#fff" stroke-width="2.2" stroke-opacity="0.75" paint-order="stroke" font-family="Liberation Sans">Aquitaine</text>
<text x="630" y="298.0" font-size="11" fill="#7c6490" font-style="italic" stroke="#fff" stroke-width="2.2" stroke-opacity="0.75" paint-order="stroke" font-family="Liberation Sans">Provence-</text>
<text x="627" y="310.0" font-size="11" fill="#7c6490" font-style="italic" stroke="#fff" stroke-width="2.2" stroke-opacity="0.75" paint-order="stroke" font-family="Liberation Sans">Alpes-Côte</text>
<text x="637" y="322.0" font-size="11" fill="#7c6490" font-style="italic" stroke="#fff" stroke-width="2.2" stroke-opacity="0.75" paint-order="stroke" font-family="Liberation Sans">d'Azur</text>
<text x="444" y="334.0" font-size="11" fill="#7c6490" font-style="italic" stroke="#fff" stroke-width="2.2" stroke-opacity="0.75" paint-order="stroke" font-family="Liberation Sans">Occitanie</text>
<text x="1293" y="328.0" font-size="11" fill="#7c6490" font-style="italic" stroke="#fff" stroke-width="2.2" stroke-opacity="0.75" paint-order="stroke" font-family="Liberation Sans">Централна</text>
<text x="1305" y="341.0" font-size="11" fill="#7c6490" font-style="italic" stroke="#fff" stroke-width="2.2" stroke-opacity="0.75" paint-order="stroke" font-family="Liberation Sans">Србија</text>
<text x="78" y="354.0" font-size="11" fill="#7c6490" font-style="italic" stroke="#fff" stroke-width="2.2" stroke-opacity="0.75" paint-order="stroke" font-family="Liberation Sans">Asturias /</text>
<text x="82" y="366.0" font-size="11" fill="#7c6490" font-style="italic" stroke="#fff" stroke-width="2.2" stroke-opacity="0.75" paint-order="stroke" font-family="Liberation Sans">Asturies</text>
<text x="860" y="350.0" font-size="11" fill="#7c6490" font-style="italic" stroke="#fff" stroke-width="2.2" stroke-opacity="0.75" paint-order="stroke" font-family="Liberation Sans">Toscana</text>
<text x="0" y="389.0" font-size="11" fill="#7c6490" font-style="italic" stroke="#fff" stroke-width="2.2" stroke-opacity="0.75" paint-order="stroke" font-family="Liberation Sans">alicia</text>
<text x="267" y="395.0" font-size="11" fill="#7c6490" font-style="italic" stroke="#fff" stroke-width="2.2" stroke-opacity="0.75" paint-order="stroke" font-family="Liberation Sans">Navarra</text>
<text x="265" y="407.0" font-size="11" fill="#7c6490" font-style="italic" stroke="#fff" stroke-width="2.2" stroke-opacity="0.75" paint-order="stroke" font-family="Liberation Sans">Nafarroa</text>
<text x="1255" y="436.0" font-size="11" fill="#7c6490" font-style="italic" stroke="#fff" stroke-width="2.2" stroke-opacity="0.75" paint-order="stroke" font-family="Liberation Sans">Shqipëria</text>
<text x="1263" y="448.0" font-size="11" fill="#7c6490" font-style="italic" stroke="#fff" stroke-width="2.2" stroke-opacity="0.75" paint-order="stroke" font-family="Liberation Sans">Veriore</text>
<text x="978" y="420.0" font-size="11" fill="#7c6490" font-style="italic" stroke="#fff" stroke-width="2.2" stroke-opacity="0.75" paint-order="stroke" font-family="Liberation Sans">Abruzzo</text>
<text x="416" y="456.0" font-size="11" fill="#7c6490" font-style="italic" stroke="#fff" stroke-width="2.2" stroke-opacity="0.75" paint-order="stroke" font-family="Liberation Sans">Catalunya</text>
<text x="163" y="452.0" font-size="11" fill="#7c6490" font-style="italic" stroke="#fff" stroke-width="2.2" stroke-opacity="0.75" paint-order="stroke" font-family="Liberation Sans">Castilla</text>
<text x="165" y="464.0" font-size="11" fill="#7c6490" font-style="italic" stroke="#fff" stroke-width="2.2" stroke-opacity="0.75" paint-order="stroke" font-family="Liberation Sans">y León</text>
<text x="314" y="474.0" font-size="11" fill="#7c6490" font-style="italic" stroke="#fff" stroke-width="2.2" stroke-opacity="0.75" paint-order="stroke" font-family="Liberation Sans">Aragón</text>
<text x="982" y="137.0" font-size="11" fill="#7c6490" font-style="italic" stroke="#fff" stroke-width="2.2" stroke-opacity="0.75" paint-order="stroke" font-family="Liberation Sans">Kärnten</text>
<text x="1146" y="127.0" font-size="11" fill="#7c6490" font-style="italic" stroke="#fff" stroke-width="2.2" stroke-opacity="0.75" paint-order="stroke" font-family="Liberation Sans">Dunántúl</text>
<text x="432" y="132.0" font-size="14" fill="#7c6490" letter-spacing="0.5" stroke="#fff" stroke-width="2.2" stroke-opacity="0.75" paint-order="stroke" font-family="Liberation Sans">France</text>
<text x="720" y="118.0" font-size="14" fill="#7c6490" letter-spacing="0.5" stroke="#fff" stroke-width="2.2" stroke-opacity="0.75" paint-order="stroke" font-family="Liberation Sans">Schweiz/</text>
<text x="703" y="133.0" font-size="14" fill="#7c6490" letter-spacing="0.5" stroke="#fff" stroke-width="2.2" stroke-opacity="0.75" paint-order="stroke" font-family="Liberation Sans">Suisse/Svizzera/</text>
<text x="735" y="148.0" font-size="14" fill="#7c6490" letter-spacing="0.5" stroke="#fff" stroke-width="2.2" stroke-opacity="0.75" paint-order="stroke" font-family="Liberation Sans">Svizra</text>
<text x="1007" y="74.9" font-size="13.5" fill="#7c6490" letter-spacing="0.5" stroke="#fff" stroke-width="2.2" stroke-opacity="0.75" paint-order="stroke" font-family="Liberation Sans">Österreich</text>
<text x="1195" y="109.9" font-size="13.5" fill="#7c6490" letter-spacing="0.5" stroke="#fff" stroke-width="2.2" stroke-opacity="0.75" paint-order="stroke" font-family="Liberation Sans">Magyarország</text>
<text x="1005" y="177.9" font-size="13.5" fill="#7c6490" letter-spacing="0.5" stroke="#fff" stroke-width="2.2" stroke-opacity="0.75" paint-order="stroke" font-family="Liberation Sans">Slovenija</text>
<text x="1030" y="292.9" font-size="13.5" fill="#7c6490" letter-spacing="0.5" stroke="#fff" stroke-width="2.2" stroke-opacity="0.75" paint-order="stroke" font-family="Liberation Sans">Hrvatska</text>
<text x="1118" y="306.7" font-size="13" fill="#7c6490" letter-spacing="0.5" stroke="#fff" stroke-width="2.2" stroke-opacity="0.75" paint-order="stroke" font-family="Liberation Sans">Bosna i Hercegovina /</text>
<text x="1160" y="321.7" font-size="13" fill="#7c6490" letter-spacing="0.5" stroke="#fff" stroke-width="2.2" stroke-opacity="0.75" paint-order="stroke" font-family="Liberation Sans">Босна и</text>
<text x="1142" y="336.7" font-size="13" fill="#7c6490" letter-spacing="0.5" stroke="#fff" stroke-width="2.2" stroke-opacity="0.75" paint-order="stroke" font-family="Liberation Sans">Херцеговина</text>
<text x="1301" y="305.9" font-size="13.5" fill="#7c6490" letter-spacing="0.5" stroke="#fff" stroke-width="2.2" stroke-opacity="0.75" paint-order="stroke" font-family="Liberation Sans">Србија</text>
<text x="1257" y="6.7" font-size="13" fill="#7c6490" letter-spacing="0.5" stroke="#fff" stroke-width="2.2" stroke-opacity="0.75" paint-order="stroke" font-family="Liberation Sans">Slovensko</text>
<text x="412" y="407.0" font-size="14" fill="#7c6490" letter-spacing="0.5" stroke="#fff" stroke-width="2.2" stroke-opacity="0.75" paint-order="stroke" font-family="Liberation Sans">Andorra</text>
<text x="1200" y="394.7" font-size="13" fill="#7c6490" letter-spacing="0.5" stroke="#fff" stroke-width="2.2" stroke-opacity="0.75" paint-order="stroke" font-family="Liberation Sans">Crna Gora /</text>
<text x="1203" y="409.7" font-size="13" fill="#7c6490" letter-spacing="0.5" stroke="#fff" stroke-width="2.2" stroke-opacity="0.75" paint-order="stroke" font-family="Liberation Sans">Црна Гора</text>
<text x="1297" y="397.7" font-size="13" fill="#7c6490" letter-spacing="0.5" stroke="#fff" stroke-width="2.2" stroke-opacity="0.75" paint-order="stroke" font-family="Liberation Sans">Kosova /</text>
<text x="1305" y="411.7" font-size="13" fill="#7c6490" letter-spacing="0.5" stroke="#fff" stroke-width="2.2" stroke-opacity="0.75" paint-order="stroke" font-family="Liberation Sans">Kosovo</text>
<text x="997" y="457.0" font-size="14" fill="#7c6490" letter-spacing="0.5" stroke="#fff" stroke-width="2.2" stroke-opacity="0.75" paint-order="stroke" font-family="Liberation Sans">Italia</text>
<text x="1270" y="454.7" font-size="13" fill="#7c6490" letter-spacing="0.5" stroke="#fff" stroke-width="2.2" stroke-opacity="0.75" paint-order="stroke" font-family="Liberation Sans">Северна</text>
<text x="1260" y="469.7" font-size="13" fill="#7c6490" letter-spacing="0.5" stroke="#fff" stroke-width="2.2" stroke-opacity="0.75" paint-order="stroke" font-family="Liberation Sans">Македонија</text>
<path d="M691,57 L728.7,125 L725.8,151.3 M691,57 L716.4,125 L725.8,151.3 L720.2,203 L715.7,250 L707,335.7 L704.3,391 L699.5,442" fill="none" stroke="#5a5a5a" stroke-opacity="0.6" stroke-width="3" stroke-linejoin="round" stroke-linecap="round"/>
<ellipse cx="720" cy="424" rx="13" ry="17" transform="rotate(-30 720 424)" fill="#000" opacity="0.25" filter="url(#blur3)"/>
<path d="M699.3,440.5 L680,409.4 A19.3 19.3 0 0 1 718.6,409.4 Z" fill="#4a90e2" fill-opacity="0.6" stroke="#1b74ff" stroke-width="2.2" stroke-linejoin="round"/>
<g fill="none" stroke="#000" stroke-width="1.6" stroke-linejoin="round"><circle cx="691.1" cy="413.4" r="4.5"/><circle cx="706.4" cy="413.4" r="4.5"/><path d="M691.1,413.4 H698.6 L702.9,405.1 L706.4,413.4 M698.6,413.4 L696,405.5 M694.3,405.5 H697.4 M701.2,402.4 H703.5 L702.9,405.1"/></g>
<circle cx="731" cy="146.6" r="18" fill="#5a9be8" fill-opacity="0.6" stroke="#1b74ff" stroke-width="3"/>
<text x="731" y="152.6" text-anchor="middle" font-size="17" font-weight="bold" fill="#000" font-family="Liberation Sans">4</text>
</svg>
<div style="position:absolute;left:10px;top:10px;width:34px;height:64px;border:2px solid rgba(0,0,0,0.25);border-radius:4px;background:#fff;background-clip:padding-box"><div style="position:absolute;left:0;top:29px;width:30px;height:1px;background:#ccc"></div><svg style="position:absolute;left:0;top:0" width="30" height="60" viewBox="0 0 30 60"><path d="M15 8.5 V22.5 M8 15.5 H22" stroke="#000" stroke-width="2.4"/><path d="M8 46 H22" stroke="#000" stroke-width="2.4"/></svg></div>
<div style="position:absolute;right:0;bottom:0;height:16px;padding:0 5px 0 17px;background:rgba(255,255,255,0.8);font-size:12px;line-height:16px;color:#333;white-space:nowrap"><span style="position:absolute;left:4px;top:4px;width:12px;height:8px;background:linear-gradient(#4c7be0 50%,#ffd500 50%)"></span><span style="color:#0078a8">Leaflet</span> | © <span style="color:#0078a8">OpenStreetMap</span></div>
</div>

<div class="ob" style="left:240px;top:1304px;width:204px;height:36px"></div>
<svg class="abs" style="left:257px;top:1314px" width="16" height="16" viewBox="0 0 16 16" fill="none" stroke="#020817" stroke-width="1.3" stroke-linecap="round">
  <rect x="2" y="2.8" width="12" height="11.5" rx="1.5"/><path d="M2 6.5 H14 M5.3 1.2 V4.2 M10.7 1.2 V4.2"/>
</svg>
<div class="abs" style="left:281px;top:1314px;font-size:14px;letter-spacing:-0.25px">23.08.2024 - 06.09.2024</div>

<div class="abs" style="left:1376px;top:1312px;font-size:14px;font-weight:bold;letter-spacing:-0.5px">Geofences anzeigen</div>
<div class="abs" style="left:1511px;top:1312px;width:36px;height:20px;border-radius:10px;background:#e2e8f0"></div>
<div class="abs" style="left:1513px;top:1314px;width:16px;height:16px;border-radius:8px;background:#fff;box-shadow:0 1px 2px rgba(0,0,0,.15)"></div>
<div class="ob" style="left:1555px;top:1304px;width:105px;height:36px"></div>
<div class="abs" style="left:1571px;top:1314px;font-size:14px">Spalten</div>
<svg class="abs" style="left:1628px;top:1316px" width="12" height="12" viewBox="0 0 12 12"><path d="M2.5 4.5 L6 8 L9.5 4.5" fill="none" stroke="#020817" stroke-width="1.2"/></svg>

<div class="abs" style="left:240px;top:1360px;width:1420px;height:287px;border:1px solid #e2e8f0;border-radius:6px"></div>
<div class="hl" style="top:1401px"></div>
<div class="hl" style="top:1450px"></div>
<div class="hl" style="top:1499px"></div>
<div class="hl" style="top:1548px"></div>
<div class="hl" style="top:1597px"></div>
<div class="th" style="left:249px">Zeitpunkt</div>
<svg class="abs" style="left:318px;top:1374px" width="14" height="14" viewBox="0 0 14 14" fill="none" stroke="#64748b" stroke-width="1.3" stroke-linecap="round" stroke-linejoin="round"><path d="M7 12 V2.5 M3.5 6 L7 2.5 L10.5 6"/></svg>
<div class="th" style="left:463px">Zuletzt Daten empfangen</div>
<svg class="abs" style="left:632px;top:1374px" width="16" height="14" viewBox="0 0 16 14" fill="none" stroke="#64748b" stroke-width="1.3" stroke-linecap="round" stroke-linejoin="round"><path d="M4.5 12 V2.5 M2 5 L4.5 2.5 L7 5 M11 2.5 V12 M8.5 9.5 L11 12 L13.5 9.5"/></svg>
<div class="th" style="left:822px">Quelle</div>
<svg class="abs" style="left:870px;top:1374px" width="16" height="14" viewBox="0 0 16 14" fill="none" stroke="#64748b" stroke-width="1.3" stroke-linecap="round" stroke-linejoin="round"><path d="M4.5 12 V2.5 M2 5 L4.5 2.5 L7 5 M11 2.5 V12 M8.5 9.5 L11 12 L13.5 9.5"/></svg>
<div class="th" style="left:963px">Grund</div>
<svg class="abs" style="left:1010px;top:1374px" width="16" height="14" viewBox="0 0 16 14" fill="none" stroke="#64748b" stroke-width="1.3" stroke-linecap="round" stroke-linejoin="round"><path d="M4.5 12 V2.5 M2 5 L4.5 2.5 L7 5 M11 2.5 V12 M8.5 9.5 L11 12 L13.5 9.5"/></svg>
<div class="th" style="left:1102px">Adresse</div>
<div class="th" style="left:1428px">In Geofence</div>
<div class="th" style="left:1593px">Aktionen</div>
<div class="td dt" style="left:249px;top:1418px">04.09.2024 20:51</div>
<div class="td dt" style="left:463px;top:1418px">04.09.2024 20:52</div>
<div class="td" style="left:822px;top:1418px">GPS</div>
<div class="td" style="left:963px;top:1418px">Intervall</div>
<div class="td" style="left:1102px;top:1418px">road 333 26, postcode City</div>
<svg class="abs" style="left:1601px;top:1422px" width="16" height="6" viewBox="0 0 16 6" fill="#020817"><circle cx="2" cy="3" r="1.1"/><circle cx="8" cy="3" r="1.1"/><circle cx="14" cy="3" r="1.1"/></svg>
<div class="td dt" style="left:249px;top:1467px">03.09.2024 11:06</div>
<div class="td dt" style="left:463px;top:1467px">03.09.2024 11:08</div>
<div class="td" style="left:822px;top:1467px">GPS</div>
<div class="td" style="left:963px;top:1467px">Intervall</div>
<div class="td" style="left:1102px;top:1467px">road 555 26, postcode City</div>
<svg class="abs" style="left:1601px;top:1471px" width="16" height="6" viewBox="0 0 16 6" fill="#020817"><circle cx="2" cy="3" r="1.1"/><circle cx="8" cy="3" r="1.1"/><circle cx="14" cy="3" r="1.1"/></svg>
<div class="td dt" style="left:249px;top:1516px">03.09.2024 10:23</div>
<div class="td dt" style="left:463px;top:1516px">03.09.2024 10:27</div>
<div class="td" style="left:822px;top:1516px">GPS</div>
<div class="td" style="left:963px;top:1516px">Intervall</div>
<div class="td" style="left:1102px;top:1516px">road 444 26, postcode City</div>
<svg class="abs" style="left:1601px;top:1520px" width="16" height="6" viewBox="0 0 16 6" fill="#020817"><circle cx="2" cy="3" r="1.1"/><circle cx="8" cy="3" r="1.1"/><circle cx="14" cy="3" r="1.1"/></svg>
<div class="td dt" style="left:249px;top:1565px">03.09.2024 08:11</div>
<div class="td dt" style="left:463px;top:1565px">03.09.2024 08:15</div>
<div class="td" style="left:822px;top:1565px">GPS</div>
<div class="td" style="left:963px;top:1565px">Intervall</div>
<div class="td" style="left:1102px;top:1565px">road 111 26, postcode City</div>
<svg class="abs" style="left:1601px;top:1569px" width="16" height="6" viewBox="0 0 16 6" fill="#020817"><circle cx="2" cy="3" r="1.1"/><circle cx="8" cy="3" r="1.1"/><circle cx="14" cy="3" r="1.1"/></svg>
<div class="td dt" style="left:249px;top:1614px">02.09.2024 00:31</div>
<div class="td dt" style="left:463px;top:1614px">02.09.2024 00:34</div>
<div class="td" style="left:822px;top:1614px">GPS</div>
<div class="td" style="left:963px;top:1614px">Intervall</div>
<div class="td" style="left:1102px;top:1614px">road 222 26, postcode City</div>
<svg class="abs" style="left:1601px;top:1618px" width="16" height="6" viewBox="0 0 16 6" fill="#020817"><circle cx="2" cy="3" r="1.1"/><circle cx="8" cy="3" r="1.1"/><circle cx="14" cy="3" r="1.1"/></svg>

<div class="abs" style="left:1242px;top:1665px;font-size:14px;color:#64748b">Anzahl Zeilen</div>
<div class="ob" style="left:1333px;top:1657px;width:70px;height:32px"></div>
<div class="abs" style="left:1346px;top:1665px;font-size:14px">10</div>
<svg class="abs" style="left:1376px;top:1666px" width="12" height="14" viewBox="0 0 12 14" fill="none" stroke="#64748b" stroke-width="1.1"><path d="M3.5 5 L6 2.5 L8.5 5 M3.5 9 L6 11.5 L8.5 9"/></svg>
<svg class="abs" style="left:1424px;top:1667px" width="10" height="12" viewBox="0 0 10 12" fill="none" stroke="#64748b" stroke-width="1.2"><path d="M6.5 2 L2.5 6 L6.5 10"/></svg>
<div class="abs" style="left:1441px;top:1665px;font-size:14px;color:#64748b">Vorherige</div>
<div class="ob" style="left:1523px;top:1656px;width:36px;height:35px"></div>
<div class="abs" style="left:1537px;top:1665px;font-size:14px">1</div>
<div class="abs" style="left:1579px;top:1665px;font-size:14px;color:#64748b">Nächste</div>
<svg class="abs" style="left:1637px;top:1667px" width="10" height="12" viewBox="0 0 10 12" fill="none" stroke="#64748b" stroke-width="1.2"><path d="M3.5 2 L7.5 6 L3.5 10"/></svg>
</body></html>
